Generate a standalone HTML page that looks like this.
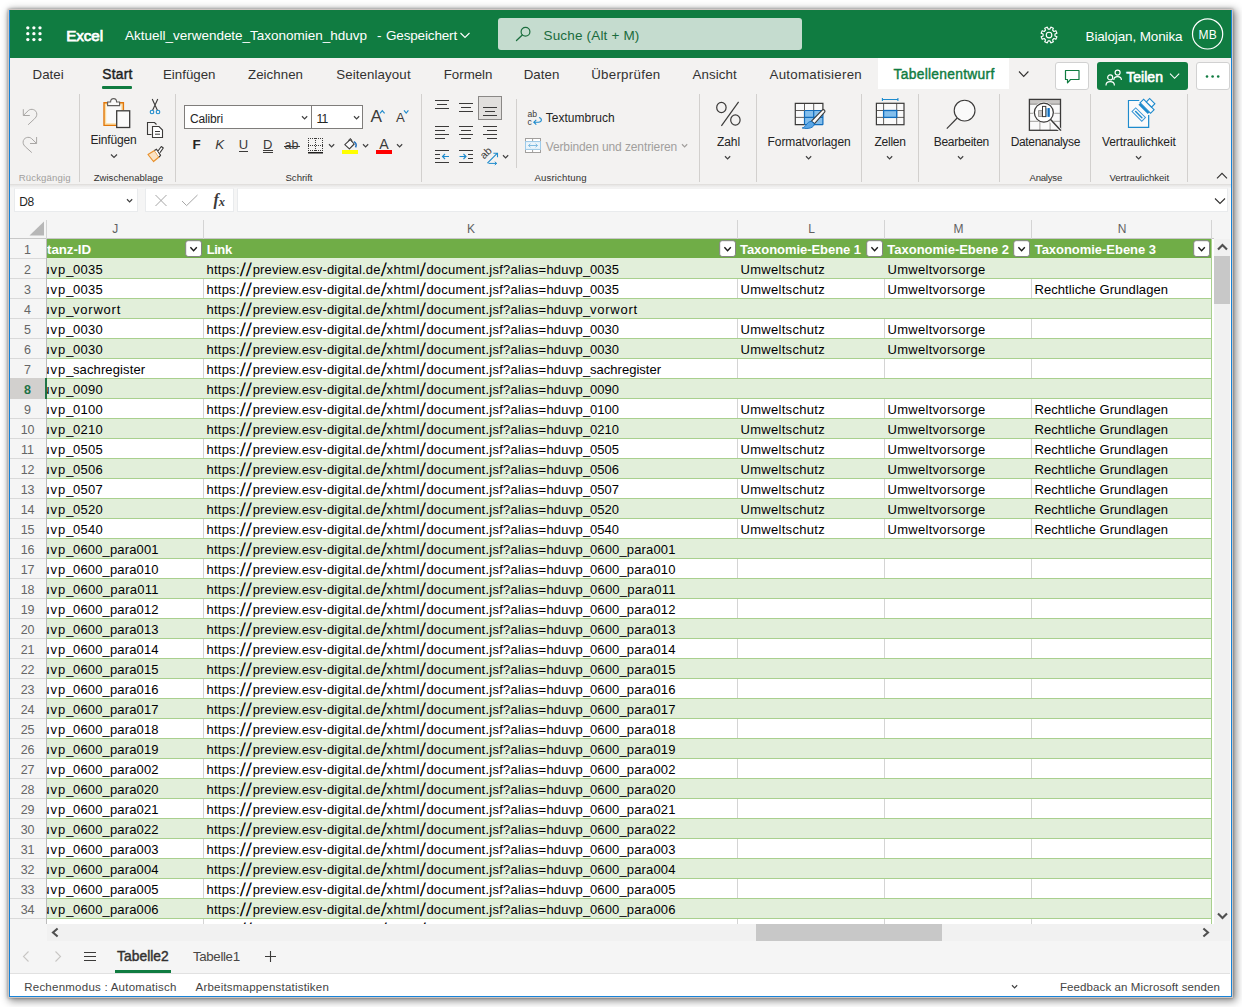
<!DOCTYPE html>
<html lang="de"><head><meta charset="utf-8"><title>Excel</title>
<style>
html,body{margin:0;padding:0;}
body{width:1242px;height:1007px;background:#fff;position:relative;overflow:hidden;font-family:"Liberation Sans",sans-serif;}
.r{position:absolute;display:block;}
.t{position:absolute;white-space:pre;line-height:20px;color:#242424;}
</style></head><body>
<div class="r" style="left:8px;top:9px;width:1225px;height:989px;background:#cfc6c3;box-shadow:0 0 3px rgba(0,0,0,.35),2px 2px 8px 1px rgba(0,0,0,.45);"></div>
<div class="r" style="left:9px;top:10px;width:1223px;height:987px;background:#1883d7;"></div>
<div class="r" id="win" style="left:10px;top:10px;width:1221px;height:986px;background:#f3f2f1;overflow:hidden;"></div>
<div class="r" style="left:10px;top:10px;width:1221px;height:48px;background:#107c41;"></div>
<svg class="r" style="left:26px;top:26px;" width="16" height="16" viewBox="0 0 16 16"><circle cx="1.8" cy="1.8" r="1.65" fill="#fff"/><circle cx="1.8" cy="7.7" r="1.65" fill="#fff"/><circle cx="1.8" cy="13.600000000000001" r="1.65" fill="#fff"/><circle cx="7.8999999999999995" cy="1.8" r="1.65" fill="#fff"/><circle cx="7.8999999999999995" cy="7.7" r="1.65" fill="#fff"/><circle cx="7.8999999999999995" cy="13.600000000000001" r="1.65" fill="#fff"/><circle cx="14.0" cy="1.8" r="1.65" fill="#fff"/><circle cx="14.0" cy="7.7" r="1.65" fill="#fff"/><circle cx="14.0" cy="13.600000000000001" r="1.65" fill="#fff"/></svg>
<span class="t" style="left:66.3px;top:26px;font-size:15.2px;letter-spacing:-0.108px;color:#fff;-webkit-text-stroke:0.42px currentColor;-webkit-text-stroke:0.75px currentColor;">Excel</span>
<span class="t" style="left:125px;top:26px;font-size:13.5px;letter-spacing:-0.012px;color:#fff;">Aktuell_verwendete_Taxonomien_hduvp</span>
<span class="t" style="left:377px;top:26px;font-size:13.5px;color:#fff;">-</span>
<span class="t" style="left:386px;top:26px;font-size:13.5px;letter-spacing:-0.163px;color:#fff;">Gespeichert</span>
<svg class="r" style="left:459px;top:31px;" width="12" height="8" viewBox="0 0 12 8"><path d="M1.5 2 L6 6.5 L10.5 2" fill="none" stroke="#fff" stroke-width="1.1"/></svg>
<div class="r" style="left:498px;top:18px;width:304px;height:32px;background:#c5dccf;border-radius:3px;"></div>
<svg class="r" style="left:515px;top:24px;" width="18" height="18" viewBox="0 0 18 18"><circle cx="10.5" cy="7.8" r="4.4" fill="none" stroke="#1b6e3e" stroke-width="1.2"/><path d="M7.3 11 L1.5 16.5" stroke="#1b6e3e" stroke-width="1.3" stroke-linecap="round"/></svg>
<span class="t" style="left:543.5px;top:26px;font-size:13.5px;letter-spacing:0.173px;color:#1a6b3c;">Suche (Alt + M)</span>
<svg class="r" style="left:1039px;top:24px;" width="22" height="22" viewBox="0 0 22 22"><path d="M17.95 12.77 L16.89 15.34 L14.90 14.53 L13.58 15.85 L14.39 17.84 L11.82 18.90 L10.99 16.93 L9.11 16.93 L8.28 18.90 L5.71 17.84 L6.52 15.85 L5.20 14.53 L3.21 15.34 L2.15 12.77 L4.12 11.94 L4.12 10.06 L2.15 9.23 L3.21 6.66 L5.20 7.47 L6.52 6.15 L5.71 4.16 L8.28 3.10 L9.11 5.07 L10.99 5.07 L11.82 3.10 L14.39 4.16 L13.58 6.15 L14.90 7.47 L16.89 6.66 L17.95 9.23 L15.98 10.06 L15.98 11.94 Z" fill="none" stroke="#fff" stroke-width="1.15" stroke-linejoin="round"/><circle cx="10.05" cy="11.0" r="2.8" fill="none" stroke="#fff" stroke-width="1.15"/></svg>
<span class="t" style="left:1085.5px;top:27px;font-size:13.5px;letter-spacing:-0.129px;color:#fff;">Bialojan, Monika</span>
<svg class="r" style="left:1190px;top:16px;" width="36" height="36" viewBox="0 0 36 36"><circle cx="17.6" cy="17.9" r="15.1" fill="none" stroke="#fff" stroke-width="1.2"/></svg>
<span class="t" style="left:1198.5px;top:25px;font-size:12px;letter-spacing:0.250px;color:#fff;">MB</span>
<div class="r" style="left:10px;top:58px;width:1221px;height:127px;background:#f3f2f1;"></div>
<div class="r" style="left:878px;top:58px;width:131px;height:31px;background:#fff;"></div>
<span class="t" style="left:32.5px;top:65px;font-size:13.3px;letter-spacing:0.031px;color:#323130;">Datei</span>
<span class="t" style="left:163px;top:65px;font-size:13.3px;letter-spacing:0.000px;color:#323130;">Einfügen</span>
<span class="t" style="left:248px;top:65px;font-size:13.3px;letter-spacing:0.037px;color:#323130;">Zeichnen</span>
<span class="t" style="left:336.2px;top:65px;font-size:13.3px;letter-spacing:0.109px;color:#323130;">Seitenlayout</span>
<span class="t" style="left:443.7px;top:65px;font-size:13.3px;letter-spacing:0.003px;color:#323130;">Formeln</span>
<span class="t" style="left:523.7px;top:65px;font-size:13.3px;letter-spacing:0.063px;color:#323130;">Daten</span>
<span class="t" style="left:591.2px;top:65px;font-size:13.3px;letter-spacing:0.277px;color:#323130;">Überprüfen</span>
<span class="t" style="left:692.5px;top:65px;font-size:13.3px;letter-spacing:0.084px;color:#323130;">Ansicht</span>
<span class="t" style="left:769.5px;top:65px;font-size:13.3px;letter-spacing:0.271px;color:#323130;">Automatisieren</span>
<span class="t" style="left:102.2px;top:65px;font-size:13.8px;letter-spacing:0.252px;color:#201f1e;-webkit-text-stroke:0.42px currentColor;">Start</span>
<div class="r" style="left:102px;top:86px;width:30px;height:3px;background:#107c41;border-radius:1px;"></div>
<span class="t" style="left:893.6px;top:65px;font-size:13.8px;letter-spacing:0.284px;color:#107c41;-webkit-text-stroke:0.42px currentColor;">Tabellenentwurf</span>
<svg class="r" style="left:1017px;top:69px;" width="14" height="10" viewBox="0 0 14 10"><path d="M2 2.5 L6.7 7.5 L11.4 2.5" fill="none" stroke="#323130" stroke-width="1.1"/></svg>
<div class="r" style="left:1055px;top:62px;width:34px;height:28px;background:#fff;border:1px solid #d1d1d1;border-radius:3px;box-sizing:border-box;"></div>
<svg class="r" style="left:1063px;top:68px;" width="18" height="17" viewBox="0 0 18 17"><path d="M2.5 2.5 H16 V11.5 H7.5 L4.5 14.8 V11.5 H2.5 Z" fill="none" stroke="#107c41" stroke-width="1.2" stroke-linejoin="round"/></svg>
<div class="r" style="left:1097px;top:62px;width:91px;height:28px;background:#107c41;border-radius:3px;"></div>
<svg class="r" style="left:1104.4px;top:67px;" width="20" height="20" viewBox="0 0 20 20"><circle cx="13.6" cy="5.6" r="2.5" fill="none" stroke="#fff" stroke-width="1.2"/><path d="M9.8 13 C9.8 8.6 17.4 8.6 17.4 13" fill="none" stroke="#fff" stroke-width="1.2"/><circle cx="6.2" cy="10.4" r="2.5" fill="none" stroke="#fff" stroke-width="1.2"/><path d="M2 18.4 C2 13.4 10.4 13.4 10.4 18.4" fill="none" stroke="#fff" stroke-width="1.2"/></svg>
<span class="t" style="left:1126.2px;top:67px;font-size:14px;letter-spacing:0.034px;color:#fff;-webkit-text-stroke:0.42px currentColor;-webkit-text-stroke:0.6px currentColor;">Teilen</span>
<svg class="r" style="left:1168px;top:71px;" width="14" height="10" viewBox="0 0 14 10"><path d="M2 2.6 L6.6 7.3 L11.2 2.6" fill="none" stroke="#fff" stroke-width="1.1"/></svg>
<div class="r" style="left:1196px;top:62px;width:34px;height:28px;background:#fff;border:1px solid #d1d1d1;border-radius:3px;box-sizing:border-box;"></div>
<svg class="r" style="left:1203px;top:73px;" width="20" height="7" viewBox="0 0 20 7"><circle cx="4" cy="3.5" r="1.3" fill="#107c41"/><circle cx="9.6" cy="3.5" r="1.3" fill="#107c41"/><circle cx="15.2" cy="3.5" r="1.3" fill="#107c41"/></svg>
<div class="r" style="left:79px;top:94px;width:1px;height:88px;background:#d2d0ce;"></div>
<div class="r" style="left:175px;top:94px;width:1px;height:88px;background:#d2d0ce;"></div>
<div class="r" style="left:421px;top:94px;width:1px;height:88px;background:#d2d0ce;"></div>
<div class="r" style="left:699px;top:94px;width:1px;height:88px;background:#d2d0ce;"></div>
<div class="r" style="left:756px;top:94px;width:1px;height:88px;background:#d2d0ce;"></div>
<div class="r" style="left:861px;top:94px;width:1px;height:88px;background:#d2d0ce;"></div>
<div class="r" style="left:918px;top:94px;width:1px;height:88px;background:#d2d0ce;"></div>
<div class="r" style="left:999px;top:94px;width:1px;height:88px;background:#d2d0ce;"></div>
<div class="r" style="left:1090px;top:94px;width:1px;height:88px;background:#d2d0ce;"></div>
<div class="r" style="left:1187px;top:94px;width:1px;height:88px;background:#d2d0ce;"></div>
<div class="r" style="left:516px;top:99px;width:1px;height:69px;background:#d2d0ce;"></div>
<svg class="r" style="left:20px;top:106px;" width="20" height="20" viewBox="0 0 20 20"><path d="M3.3 3.2 V9.5 H9.8" fill="none" stroke="#a8a6a4" stroke-width="1"/><path d="M3.5 9.3 L8.3 4.6 C11 2 16.8 3.5 16.8 8.2 C16.8 10.5 15.5 11.8 14.5 12.8 L8.1 18.8" fill="none" stroke="#a8a6a4" stroke-width="1"/></svg>
<svg class="r" style="left:20px;top:135px;" width="20" height="20" viewBox="0 0 20 20"><path d="M16.6 2 V8.5 H10" fill="none" stroke="#a8a6a4" stroke-width="1"/><path d="M16.4 8.3 L11.6 3.6 C9 1 3.1 2.5 3.1 7.2 C3.1 9.5 4.4 10.8 5.4 11.8 L11.8 17.6" fill="none" stroke="#a8a6a4" stroke-width="1"/></svg>
<span class="t" style="left:18.7px;top:168px;font-size:9.6px;letter-spacing:0.133px;color:#a19f9d;">Rückgängig</span>
<svg class="r" style="left:102px;top:96px;" width="30" height="34" viewBox="0 0 30 34"><rect x="2" y="6.8" width="19.4" height="22.6" fill="#fbdfa8"/><rect x="4.2" y="9" width="15" height="18.2" fill="#fafafa"/><path d="M21.4 14 V6.8 H2 V29.4 H14.4" fill="none" stroke="#e2770a" stroke-width="1.4"/><path d="M5.6 9.6 V6 H8.6 C8.6 1.5 14.6 1.5 14.6 6 H17.6 V9.6 Z" fill="#fafafa" stroke="#605e5c" stroke-width="1.1"/><rect x="14.7" y="14.8" width="13" height="16.7" fill="#fafafa" stroke="#3b3a39" stroke-width="1.3"/></svg>
<span class="t" style="left:90.5px;top:130px;font-size:12px;letter-spacing:-0.172px;">Einfügen</span>
<svg class="r" style="left:108.5px;top:151px;" width="10" height="10" viewBox="0 0 10 10"><path d="M2 3.50 L5 6.50 L8 3.50" fill="none" stroke="#424242" stroke-width="1.2"/></svg>
<svg class="r" style="left:148px;top:97px;" width="14" height="18" viewBox="0 0 14 18"><path d="M4.2 2 L9.4 13.2 M9.8 2 L4.6 13.2" stroke="#3b3a39" stroke-width="1.1" fill="none"/><circle cx="4" cy="15" r="1.8" fill="none" stroke="#1e8bcd" stroke-width="1.1"/><circle cx="10" cy="15" r="1.8" fill="none" stroke="#1e8bcd" stroke-width="1.1"/></svg>
<svg class="r" style="left:146px;top:121px;" width="20" height="18" viewBox="0 0 20 18"><path d="M5.5 13.5 H1.5 V1.5 H8.5 L10.5 3.5" fill="none" stroke="#3b3a39" stroke-width="1.1"/><path d="M6.5 5.5 H13 L16.5 9 V16.5 H6.5 Z" fill="#fff" stroke="#3b3a39" stroke-width="1.1"/><path d="M9 10.5 H14 M9 13.2 H14" stroke="#3b3a39" stroke-width="1"/></svg>
<svg class="r" style="left:146px;top:145px;" width="20" height="18" viewBox="0 0 20 18"><path d="M2 9.5 L8.5 5.5 L13 12 L7.5 16.5 Z" fill="#fbe3c4" stroke="#e8912d" stroke-width="1.2" stroke-linejoin="round"/><path d="M8.5 5.5 L10.5 4.2 L14.6 10.4 L13 12" fill="#fff" stroke="#3b3a39" stroke-width="1.1" stroke-linejoin="round"/><path d="M12 6 L15.3 1.5 L17.3 3 L14 7.6" fill="#fff" stroke="#3b3a39" stroke-width="1.1" stroke-linejoin="round"/></svg>
<span class="t" style="left:93.7px;top:168px;font-size:9.6px;letter-spacing:-0.003px;color:#323130;">Zwischenablage</span>
<div class="r" style="left:184px;top:105px;width:179px;height:24px;background:#fff;border:1px solid #7f7d7b;box-sizing:border-box;"></div>
<div class="r" style="left:311px;top:106px;width:1px;height:22px;background:#7f7d7b;"></div>
<span class="t" style="left:190px;top:109px;font-size:12px;letter-spacing:-0.145px;">Calibri</span>
<svg class="r" style="left:300.4px;top:112.7px;" width="9.2" height="9.2" viewBox="0 0 9.2 9.2"><path d="M2 3.30 L4.6 5.90 L7.2 3.30" fill="none" stroke="#424242" stroke-width="1.2"/></svg>
<span class="t" style="left:316.6px;top:109px;font-size:12.2px;letter-spacing:-1px;">11</span>
<svg class="r" style="left:352.09999999999997px;top:112.7px;" width="9.2" height="9.2" viewBox="0 0 9.2 9.2"><path d="M2 3.30 L4.6 5.90 L7.2 3.30" fill="none" stroke="#424242" stroke-width="1.2"/></svg>
<span class="t" style="left:370.5px;top:106px;font-size:17.2px;color:#3b3a39;">A</span>
<svg class="r" style="left:379.3px;top:108.8px;" width="7" height="6" viewBox="0 0 7 6"><path d="M1 4.4 L3.3 1.6 L5.6 4.4" fill="none" stroke="#1e8bcd" stroke-width="1.1"/></svg>
<span class="t" style="left:396px;top:108px;font-size:13.2px;color:#3b3a39;">A</span>
<svg class="r" style="left:403.3px;top:109.2px;" width="7" height="6" viewBox="0 0 7 6"><path d="M1 1.4 L3.2 4.2 L5.4 1.4" fill="none" stroke="#1e8bcd" stroke-width="1.1"/></svg>
<span class="t" style="left:192.5px;top:135px;font-size:13.4px;font-weight:700;">F</span>
<span class="t" style="left:215.2px;top:135px;font-size:13.4px;font-style:italic;color:#3b3a39;">K</span>
<span class="t" style="left:238.7px;top:135px;font-size:13px;color:#3b3a39;">U</span>
<div class="r" style="left:239px;top:151px;width:9px;height:1px;background:#3b3a39;"></div>
<span class="t" style="left:263px;top:135px;font-size:13px;color:#3b3a39;">D</span>
<div class="r" style="left:263px;top:150px;width:10px;height:1px;background:#3b3a39;"></div>
<div class="r" style="left:263px;top:152px;width:10px;height:1px;background:#3b3a39;"></div>
<span class="t" style="left:284.5px;top:135px;font-size:12.5px;letter-spacing:0.047px;color:#3b3a39;">ab</span>
<div class="r" style="left:284px;top:146px;width:16px;height:1px;background:#3b3a39;"></div>
<svg class="r" style="left:308px;top:138px;" width="16" height="16" viewBox="0 0 16 16"><g fill="#3b3a39"><rect x="0" y="0" width="1" height="1"/><rect x="2" y="0" width="1" height="1"/><rect x="4" y="0" width="1" height="1"/><rect x="6" y="0" width="1" height="1"/><rect x="8" y="0" width="1" height="1"/><rect x="10" y="0" width="1" height="1"/><rect x="12" y="0" width="1" height="1"/><rect x="14" y="0" width="1" height="1"/><rect x="0" y="7" width="1" height="1"/><rect x="2" y="7" width="1" height="1"/><rect x="4" y="7" width="1" height="1"/><rect x="6" y="7" width="1" height="1"/><rect x="8" y="7" width="1" height="1"/><rect x="10" y="7" width="1" height="1"/><rect x="12" y="7" width="1" height="1"/><rect x="14" y="7" width="1" height="1"/><rect x="0" y="12" width="1" height="1"/><rect x="2" y="12" width="1" height="1"/><rect x="4" y="12" width="1" height="1"/><rect x="6" y="12" width="1" height="1"/><rect x="8" y="12" width="1" height="1"/><rect x="10" y="12" width="1" height="1"/><rect x="12" y="12" width="1" height="1"/><rect x="14" y="12" width="1" height="1"/><rect x="0" y="0" width="1" height="1"/><rect x="0" y="2" width="1" height="1"/><rect x="0" y="4" width="1" height="1"/><rect x="0" y="6" width="1" height="1"/><rect x="0" y="8" width="1" height="1"/><rect x="0" y="10" width="1" height="1"/><rect x="0" y="12" width="1" height="1"/><rect x="7" y="0" width="1" height="1"/><rect x="7" y="2" width="1" height="1"/><rect x="7" y="4" width="1" height="1"/><rect x="7" y="6" width="1" height="1"/><rect x="7" y="8" width="1" height="1"/><rect x="7" y="10" width="1" height="1"/><rect x="7" y="12" width="1" height="1"/><rect x="14" y="0" width="1" height="1"/><rect x="14" y="2" width="1" height="1"/><rect x="14" y="4" width="1" height="1"/><rect x="14" y="6" width="1" height="1"/><rect x="14" y="8" width="1" height="1"/><rect x="14" y="10" width="1" height="1"/><rect x="14" y="12" width="1" height="1"/></g><rect x="0" y="14" width="15" height="1.5" fill="#201f1e"/></svg>
<svg class="r" style="left:327.0px;top:140.9px;" width="9.2" height="9.2" viewBox="0 0 9.2 9.2"><path d="M2 3.30 L4.6 5.90 L7.2 3.30" fill="none" stroke="#424242" stroke-width="1.2"/></svg>
<svg class="r" style="left:342px;top:137px;" width="18" height="18" viewBox="0 0 18 18"><path d="M2.8 7.6 L8.2 2.6 L12.2 7 L7.4 11.8 Z" fill="#fafafa" stroke="#3b3a39" stroke-width="1.1" stroke-linejoin="round"/><path d="M6.9 4 C7.2 0.8 9.6 0.6 9.9 4.6" fill="none" stroke="#3b3a39" stroke-width="1"/><path d="M11.8 4.6 C14 5.6 14.6 8 13.6 10.4" fill="none" stroke="#1e6fc0" stroke-width="1.5"/><rect x="0" y="13" width="16" height="4" fill="#ffff00"/></svg>
<svg class="r" style="left:360.9px;top:140.9px;" width="9.2" height="9.2" viewBox="0 0 9.2 9.2"><path d="M2 3.30 L4.6 5.90 L7.2 3.30" fill="none" stroke="#424242" stroke-width="1.2"/></svg>
<span class="t" style="left:379.3px;top:134px;font-size:14.2px;color:#3b3a39;">A</span>
<div class="r" style="left:376px;top:150px;width:16px;height:4px;background:#ff0000;"></div>
<svg class="r" style="left:394.9px;top:140.9px;" width="9.2" height="9.2" viewBox="0 0 9.2 9.2"><path d="M2 3.30 L4.6 5.90 L7.2 3.30" fill="none" stroke="#424242" stroke-width="1.2"/></svg>
<span class="t" style="left:285.5px;top:168px;font-size:9.6px;letter-spacing:-0.029px;color:#323130;">Schrift</span>
<div class="r" style="left:435px;top:100px;width:14px;height:1px;background:#3b3a39;"></div>
<div class="r" style="left:437px;top:104px;width:10px;height:1px;background:#3b3a39;"></div>
<div class="r" style="left:435px;top:108px;width:14px;height:1px;background:#3b3a39;"></div>
<div class="r" style="left:459px;top:103px;width:14px;height:1px;background:#3b3a39;"></div>
<div class="r" style="left:461px;top:107px;width:10px;height:1px;background:#3b3a39;"></div>
<div class="r" style="left:459px;top:111px;width:14px;height:1px;background:#3b3a39;"></div>
<div class="r" style="left:478px;top:96px;width:24px;height:24px;background:#e1dfdd;border:1px solid #8a8886;box-sizing:border-box;"></div>
<div class="r" style="left:483px;top:107px;width:14px;height:1px;background:#3b3a39;"></div>
<div class="r" style="left:485px;top:111px;width:10px;height:1px;background:#3b3a39;"></div>
<div class="r" style="left:483px;top:115px;width:14px;height:1px;background:#3b3a39;"></div>
<div class="r" style="left:435px;top:126px;width:14px;height:1px;background:#3b3a39;"></div>
<div class="r" style="left:435px;top:130px;width:10px;height:1px;background:#3b3a39;"></div>
<div class="r" style="left:435px;top:134px;width:14px;height:1px;background:#3b3a39;"></div>
<div class="r" style="left:435px;top:138px;width:10px;height:1px;background:#3b3a39;"></div>
<div class="r" style="left:459px;top:126px;width:14px;height:1px;background:#3b3a39;"></div>
<div class="r" style="left:461px;top:130px;width:10px;height:1px;background:#3b3a39;"></div>
<div class="r" style="left:459px;top:134px;width:14px;height:1px;background:#3b3a39;"></div>
<div class="r" style="left:461px;top:138px;width:10px;height:1px;background:#3b3a39;"></div>
<div class="r" style="left:483px;top:126px;width:14px;height:1px;background:#3b3a39;"></div>
<div class="r" style="left:487px;top:130px;width:10px;height:1px;background:#3b3a39;"></div>
<div class="r" style="left:483px;top:134px;width:14px;height:1px;background:#3b3a39;"></div>
<div class="r" style="left:487px;top:138px;width:10px;height:1px;background:#3b3a39;"></div>
<div class="r" style="left:435px;top:150px;width:14px;height:1px;background:#3b3a39;"></div>
<div class="r" style="left:435px;top:162px;width:14px;height:1px;background:#3b3a39;"></div>
<div class="r" style="left:435px;top:154px;width:5px;height:1px;background:#3b3a39;"></div>
<div class="r" style="left:435px;top:158px;width:5px;height:1px;background:#3b3a39;"></div>
<svg class="r" style="left:441px;top:152px;" width="9" height="9" viewBox="0 0 9 9"><path d="M8 4.5 H1.5 M4 2 L1.5 4.5 L4 7" fill="none" stroke="#1e8bcd" stroke-width="1.1"/></svg>
<div class="r" style="left:459px;top:150px;width:14px;height:1px;background:#3b3a39;"></div>
<div class="r" style="left:459px;top:162px;width:14px;height:1px;background:#3b3a39;"></div>
<div class="r" style="left:468px;top:154px;width:5px;height:1px;background:#3b3a39;"></div>
<div class="r" style="left:468px;top:158px;width:5px;height:1px;background:#3b3a39;"></div>
<svg class="r" style="left:459px;top:152px;" width="9" height="9" viewBox="0 0 9 9"><path d="M0.5 4.5 H7 M4.5 2 L7 4.5 L4.5 7" fill="none" stroke="#1e8bcd" stroke-width="1.1"/></svg>
<svg class="r" style="left:481px;top:148px;" width="19" height="18" viewBox="0 0 19 18"><text x="0" y="0" font-size="10.5" font-family="Liberation Sans, sans-serif" fill="#3b3a39" transform="translate(3,11.6) rotate(-43)">ab</text><path d="M6.4 15.2 L16.4 5.2 M12.4 5.2 H16.5 V9.3" fill="none" stroke="#1e8bcd" stroke-width="1.1"/><path d="M7.5 15.4 H15.6 M13.8 13.8 L15.7 15.4 L13.8 17" fill="none" stroke="#1e8bcd" stroke-width="1"/></svg>
<svg class="r" style="left:501.09999999999997px;top:152.4px;" width="9.2" height="9.2" viewBox="0 0 9.2 9.2"><path d="M2 3.30 L4.6 5.90 L7.2 3.30" fill="none" stroke="#424242" stroke-width="1.2"/></svg>
<svg class="r" style="left:526px;top:109px;" width="17" height="17" viewBox="0 0 17 17"><text x="1.5" y="8.2" font-size="8.6" font-family="Liberation Sans, sans-serif" fill="#3b3a39">ab</text><text x="1.5" y="15.6" font-size="8.6" font-family="Liberation Sans, sans-serif" fill="#3b3a39">c</text><path d="M13 8.5 C16.5 9.5 16 13.2 12.5 13.2 H8 M10.3 10.8 L7.8 13.2 L10.3 15.6" fill="none" stroke="#1e8bcd" stroke-width="1.1"/></svg>
<span class="t" style="left:545.7px;top:108px;font-size:12px;letter-spacing:0.027px;">Textumbruch</span>
<svg class="r" style="left:525px;top:138px;" width="16" height="15" viewBox="0 0 16 15"><rect x="0.5" y="0.5" width="15" height="14" fill="#fff" stroke="#a19f9d" stroke-width="1"/><path d="M0.5 3.6 H15.5 M0.5 11.4 H15.5 M7.6 0.5 V3.6 M7.6 11.4 V14.5" stroke="#a19f9d" stroke-width="1"/><rect x="0.5" y="3.6" width="15" height="7.8" fill="#eaf4fb" stroke="#9ccbea" stroke-width="1"/><path d="M3.5 7.5 H12.5 M5.4 5.8 L3.5 7.5 L5.4 9.2 M10.6 5.8 L12.5 7.5 L10.6 9.2" fill="none" stroke="#7fbbe0" stroke-width="1"/></svg>
<span class="t" style="left:545.7px;top:137px;font-size:12px;letter-spacing:-0.109px;color:#a19f9d;">Verbinden und zentrieren</span>
<svg class="r" style="left:680.4px;top:140.9px;" width="9.2" height="9.2" viewBox="0 0 9.2 9.2"><path d="M2 3.30 L4.6 5.90 L7.2 3.30" fill="none" stroke="#a19f9d" stroke-width="1.2"/></svg>
<span class="t" style="left:534.5px;top:168px;font-size:9.6px;letter-spacing:0.148px;color:#323130;">Ausrichtung</span>
<svg class="r" style="left:714px;top:99px;" width="28" height="29" viewBox="0 0 28 29"><ellipse cx="7.4" cy="8.5" rx="4.7" ry="5.2" fill="none" stroke="#3b3a39" stroke-width="1.2"/><ellipse cx="21.4" cy="21" rx="4.7" ry="5.2" fill="none" stroke="#3b3a39" stroke-width="1.2"/><path d="M24.6 2.8 L7.4 26.8" stroke="#3b3a39" stroke-width="1.2"/></svg>
<span class="t" style="left:717px;top:132px;font-size:12px;letter-spacing:-0.086px;">Zahl</span>
<svg class="r" style="left:722.9px;top:153.4px;" width="9.2" height="9.2" viewBox="0 0 9.2 9.2"><path d="M2 3.30 L4.6 5.90 L7.2 3.30" fill="none" stroke="#424242" stroke-width="1.2"/></svg>
<svg class="r" style="left:794px;top:101px;" width="32" height="30" viewBox="0 0 32 30"><rect x="1.3" y="2.3" width="27.6" height="21.4" fill="#fafafa"/><rect x="10.5" y="9.5" width="18.4" height="14.2" fill="#83beec"/><path d="M10.5 9.5 H28.9 M10.5 16.4 H28.9 M10.5 9.5 V23.7 M19.7 9.5 V23.7 M28.9 9.5 V23.7 M10.5 23.7 H28.9" stroke="#0f6cbd" stroke-width="1.2" fill="none"/><path d="M1.3 9.5 H10.5 M1.3 16.4 H10.5 M10.5 2.3 V9.5 M19.7 2.3 V9.5" stroke="#605e5c" stroke-width="1"/><path d="M10.5 23.7 H1.3 V2.3 H28.9 V9.5" fill="none" stroke="#3b3a39" stroke-width="1.2"/><path d="M30.4 11.4 L20.6 22.6 L17.4 20.2 L28.2 9.2 C29.8 7.8 31.8 9.6 30.4 11.4 Z" fill="#fafafa" stroke="#3b3a39" stroke-width="1.1"/><path d="M17.4 20.4 L20.4 22.8 C20 26.6 15 28.4 8.2 27 C12.6 25.8 12.4 20.6 17.4 20.4 Z" fill="#5aa6e6" stroke="#0f6cbd" stroke-width="0.9"/></svg>
<span class="t" style="left:767.5px;top:132px;font-size:12px;letter-spacing:-0.060px;">Formatvorlagen</span>
<svg class="r" style="left:804.1px;top:153.4px;" width="9.2" height="9.2" viewBox="0 0 9.2 9.2"><path d="M2 3.30 L4.6 5.90 L7.2 3.30" fill="none" stroke="#424242" stroke-width="1.2"/></svg>
<svg class="r" style="left:875px;top:96px;" width="31" height="30" viewBox="0 0 31 30"><path d="M7.4 2 V5 M22.9 2 V5 M7.4 3.5 H22.9" stroke="#1e8bcd" stroke-width="1.1" fill="none"/><rect x="1.4" y="7.3" width="27.6" height="21.4" fill="#fafafa"/><path d="M1.4 14.5 H29 M1.4 21.4 H29 M8.6 7.3 V28.7 M21.7 7.3 V28.7" stroke="#605e5c" stroke-width="1"/><rect x="8.6" y="14.5" width="13.1" height="6.9" fill="#83beec" stroke="#0f6cbd" stroke-width="1.3"/><rect x="1.4" y="7.3" width="27.6" height="21.4" fill="none" stroke="#3b3a39" stroke-width="1.2"/></svg>
<span class="t" style="left:874.5px;top:132px;font-size:12px;letter-spacing:-0.248px;">Zellen</span>
<svg class="r" style="left:884.9px;top:153.4px;" width="9.2" height="9.2" viewBox="0 0 9.2 9.2"><path d="M2 3.30 L4.6 5.90 L7.2 3.30" fill="none" stroke="#424242" stroke-width="1.2"/></svg>
<svg class="r" style="left:944px;top:98px;" width="34" height="34" viewBox="0 0 34 34"><circle cx="20.6" cy="12.6" r="10.4" fill="#fafafa" stroke="#3b3a39" stroke-width="1.1"/><path d="M13.2 20 L2.8 30.6" stroke="#3b3a39" stroke-width="1.2"/></svg>
<span class="t" style="left:933.7px;top:132px;font-size:12px;letter-spacing:-0.275px;">Bearbeiten</span>
<svg class="r" style="left:956.1px;top:153.4px;" width="9.2" height="9.2" viewBox="0 0 9.2 9.2"><path d="M2 3.30 L4.6 5.90 L7.2 3.30" fill="none" stroke="#424242" stroke-width="1.2"/></svg>
<svg class="r" style="left:1028px;top:98px;" width="35" height="35" viewBox="0 0 35 35"><rect x="1.4" y="1.4" width="31.1" height="30.9" fill="#fafafa"/><rect x="1.4" y="1.4" width="31.1" height="4.2" fill="#c8c6c4"/><path d="M1.4 6.1 H32.5" stroke="#797775" stroke-width="1"/><path d="M1.4 15.3 H32.5 M1.4 23.3 H32.5 M11.9 6.1 V32.3 M22.1 6.1 V32.3" stroke="#a19f9d" stroke-width="1"/><rect x="1.4" y="1.4" width="31.1" height="30.9" fill="none" stroke="#3b3a39" stroke-width="1.3"/><path d="M22.4 22.4 L32.7 32.5" stroke="#fafafa" stroke-width="3.4"/><circle cx="15.85" cy="14.6" r="10.6" fill="#fafafa"/><circle cx="15.85" cy="14.6" r="9.5" fill="#fff" stroke="#3b3a39" stroke-width="1.25"/><rect x="10.6" y="12.6" width="3.6" height="5.9" fill="#c8c6c4" stroke="#8a8886" stroke-width="0.8"/><rect x="18" y="10.1" width="3.7" height="8.7" fill="#83beec"/><rect x="19.9" y="10.1" width="1.8" height="8.7" fill="#0f6cbd"/><rect x="14.5" y="8.4" width="3.3" height="10.2" fill="#fff" stroke="#3b3a39" stroke-width="1"/><path d="M22.6 21.6 L32.8 32.4" stroke="#3b3a39" stroke-width="1.5"/></svg>
<span class="t" style="left:1010.7px;top:132px;font-size:12px;letter-spacing:-0.341px;">Datenanalyse</span>
<span class="t" style="left:1029.5px;top:168px;font-size:9.6px;letter-spacing:-0.234px;color:#323130;">Analyse</span>
<svg class="r" style="left:1126px;top:95px;" width="34" height="36" viewBox="0 0 34 36"><path d="M13.2 5.5 H2.5 V32.4 H22.6 V20.1" fill="#fafafa" stroke="#1e8bcd" stroke-width="1.1"/><path d="M2.5 5.5 H16 L22.6 13 V32.4 H2.5 Z" fill="#fafafa" stroke="none"/><path d="M13.2 5.5 H2.5 V32.4 H22.6 V20.1" fill="none" stroke="#1e8bcd" stroke-width="1.1"/><g transform="translate(12.75,19.57) rotate(45)"><rect x="-6.9" y="-2.6" width="13.8" height="5.2" fill="#fafafa" stroke="#3a96d6" stroke-width="1"/><path d="M-4.4 0 H4.4" stroke="#1e8bcd" stroke-width="1.5" stroke-linecap="round"/><rect x="-7.2" y="-9.2" width="13.2" height="2.4" fill="#1e8bcd"/><rect x="-7.4" y="-14.3" width="14.8" height="5" fill="#fafafa" stroke="#1e8bcd" stroke-width="1.1"/><rect x="-3.6" y="-19" width="7.4" height="4.7" fill="#fafafa" stroke="#1e8bcd" stroke-width="1.1"/></g></svg>
<span class="t" style="left:1102px;top:132px;font-size:12px;letter-spacing:-0.112px;">Vertraulichkeit</span>
<svg class="r" style="left:1134.1000000000001px;top:153.4px;" width="9.2" height="9.2" viewBox="0 0 9.2 9.2"><path d="M2 3.30 L4.6 5.90 L7.2 3.30" fill="none" stroke="#424242" stroke-width="1.2"/></svg>
<span class="t" style="left:1109.5px;top:168px;font-size:9.6px;letter-spacing:-0.051px;color:#323130;">Vertraulichkeit</span>
<svg class="r" style="left:1215px;top:171px;" width="14" height="10" viewBox="0 0 14 10"><path d="M2 7.4 L7 2.4 L12 7.4" fill="none" stroke="#323130" stroke-width="1.1"/></svg>
<div class="r" style="left:10px;top:184px;width:1221px;height:1px;background:#e1dfdd;"></div>
<div class="r" style="left:10px;top:185px;width:1221px;height:3px;background:#f8f8f8;background:linear-gradient(#e6e5e4,#f5f5f5);"></div>
<div class="r" style="left:10px;top:188px;width:1221px;height:32px;background:#f5f5f5;"></div>
<div class="r" style="left:14px;top:188px;width:124px;height:24px;background:#fff;border:1px solid #e9ebed;border-top-color:#f2f2f2;box-sizing:border-box;"></div>
<span class="t" style="left:19.3px;top:192px;font-size:12px;letter-spacing:-0.4px;">D8</span>
<svg class="r" style="left:125.1px;top:196.4px;" width="9.2" height="9.2" viewBox="0 0 9.2 9.2"><path d="M2 3.30 L4.6 5.90 L7.2 3.30" fill="none" stroke="#424242" stroke-width="1.2"/></svg>
<div class="r" style="left:145px;top:188px;width:89px;height:24px;background:#fff;border:1px solid #e9ebed;border-top-color:#f2f2f2;box-sizing:border-box;"></div>
<svg class="r" style="left:154px;top:194px;" width="14" height="13" viewBox="0 0 14 13"><path d="M1.5 1 L12.5 12 M12.5 1 L1.5 12" stroke="#a6a6a6" stroke-width="1"/></svg>
<svg class="r" style="left:181px;top:194px;" width="18" height="13" viewBox="0 0 18 13"><path d="M1 7 L5.6 11.6 L16.5 1" fill="none" stroke="#a6a6a6" stroke-width="1"/></svg>
<span class="t" style="left:213.5px;top:190px;font-size:16px;font-family:'Liberation Serif',serif;font-style:italic;font-weight:700;color:#3b3a39;letter-spacing:-0.2px;">f<span style="font-size:12.5px;position:relative;top:1px;">x</span></span>
<div class="r" style="left:237px;top:188px;width:991px;height:24px;background:#fff;border:1px solid #e9ebed;border-top-color:#f2f2f2;box-sizing:border-box;"></div>
<svg class="r" style="left:1213px;top:196px;" width="14" height="10" viewBox="0 0 14 10"><path d="M2 2.5 L7 7.5 L12 2.5" fill="none" stroke="#323130" stroke-width="1.1"/></svg>
<div class="r" style="left:10px;top:220px;width:1204px;height:704px;background:#fff;"></div>
<div class="r" style="left:10px;top:220px;width:1204px;height:19px;background:#f5f5f5;"></div>
<div class="r" style="left:10px;top:238px;width:1204px;height:1px;background:#c8c8c8;"></div>
<span class="t" style="left:112.2px;top:219px;font-size:12px;color:#616161;">J</span>
<div class="r" style="left:203px;top:220px;width:1px;height:19px;background:#d4d4d4;"></div>
<span class="t" style="left:466.9921875px;top:219px;font-size:12px;color:#616161;">K</span>
<div class="r" style="left:737px;top:220px;width:1px;height:19px;background:#d4d4d4;"></div>
<span class="t" style="left:808.15625px;top:219px;font-size:12px;color:#616161;">L</span>
<div class="r" style="left:884px;top:220px;width:1px;height:19px;background:#d4d4d4;"></div>
<span class="t" style="left:953.5px;top:219px;font-size:12px;color:#616161;">M</span>
<div class="r" style="left:1031px;top:220px;width:1px;height:19px;background:#d4d4d4;"></div>
<span class="t" style="left:1117.6640625px;top:219px;font-size:12px;color:#616161;">N</span>
<div class="r" style="left:1211px;top:220px;width:1px;height:19px;background:#d4d4d4;"></div>
<div class="r" style="left:46px;top:220px;width:1px;height:19px;background:#d4d4d4;"></div>
<svg class="r" style="left:29px;top:221px;" width="16" height="15" viewBox="0 0 16 15"><path d="M15 0.5 V14.5 H0.5 Z" fill="#b7b7b7"/></svg>
<div class="r" style="left:10px;top:239px;width:36px;height:685px;background:#f5f5f5;"></div>
<div class="r" style="left:46px;top:239px;width:1px;height:685px;background:#bcbcbc;"></div>
<div class="r" style="left:47px;top:239px;width:1165px;height:19px;background:#70ad47;"></div>
<div class="r" style="left:47px;top:258px;width:1165px;height:1px;background:#e2efda;"></div>
<span class="t" style="left:206.7px;top:240px;font-size:13px;letter-spacing:-0.434px;font-weight:700;color:#fff;">Link</span>
<span class="t" style="left:740px;top:240px;font-size:13px;letter-spacing:-0.050px;font-weight:700;color:#fff;">Taxonomie-Ebene 1</span>
<span class="t" style="left:887.3px;top:240px;font-size:13px;letter-spacing:-0.008px;font-weight:700;color:#fff;">Taxonomie-Ebene 2</span>
<span class="t" style="left:1034.7px;top:240px;font-size:13px;letter-spacing:-0.032px;font-weight:700;color:#fff;">Taxonomie-Ebene 3</span>
<div class="r" style="left:47px;top:239px;width:150px;height:19px;overflow:hidden;">
<span class="t" style="left:-19.01875px;top:1px;font-size:13.3px;font-weight:700;color:#fff;letter-spacing:-0.05px;">Instanz-ID</span>
</div>
<svg class="r" style="left:185px;top:240px;" width="18" height="18" viewBox="0 0 18 18"><rect x="0.7" y="0.7" width="15.8" height="15.8" rx="2.4" fill="#fff" stroke="#858585" stroke-width="1"/><path d="M5.4 7.3 l3.2 3.5 l3.2 -3.5" fill="none" stroke="#1a1a1a" stroke-width="1.4"/></svg>
<svg class="r" style="left:719px;top:240px;" width="18" height="18" viewBox="0 0 18 18"><rect x="0.7" y="0.7" width="15.8" height="15.8" rx="2.4" fill="#fff" stroke="#858585" stroke-width="1"/><path d="M5.4 7.3 l3.2 3.5 l3.2 -3.5" fill="none" stroke="#1a1a1a" stroke-width="1.4"/></svg>
<svg class="r" style="left:866px;top:240px;" width="18" height="18" viewBox="0 0 18 18"><rect x="0.7" y="0.7" width="15.8" height="15.8" rx="2.4" fill="#fff" stroke="#858585" stroke-width="1"/><path d="M5.4 7.3 l3.2 3.5 l3.2 -3.5" fill="none" stroke="#1a1a1a" stroke-width="1.4"/></svg>
<svg class="r" style="left:1013px;top:240px;" width="18" height="18" viewBox="0 0 18 18"><rect x="0.7" y="0.7" width="15.8" height="15.8" rx="2.4" fill="#fff" stroke="#858585" stroke-width="1"/><path d="M5.4 7.3 l3.2 3.5 l3.2 -3.5" fill="none" stroke="#1a1a1a" stroke-width="1.4"/></svg>
<svg class="r" style="left:1193px;top:240px;" width="18" height="18" viewBox="0 0 18 18"><rect x="0.7" y="0.7" width="15.8" height="15.8" rx="2.4" fill="#fff" stroke="#858585" stroke-width="1"/><path d="M5.4 7.3 l3.2 3.5 l3.2 -3.5" fill="none" stroke="#1a1a1a" stroke-width="1.4"/></svg>
<div class="r" style="left:47px;top:259px;width:1165px;height:19px;background:#e2efda;"></div>
<div class="r" style="left:47px;top:278px;width:1165px;height:1px;background:#a9d08e;"></div>
<div class="r" style="left:10px;top:278px;width:36px;height:1px;background:#d9d9d9;"></div>
<div class="r" style="left:47px;top:259px;width:156px;height:19px;overflow:hidden;">
<span class="t" style="left:-4.800000000000002px;top:1px;font-size:13px;color:#000;letter-spacing:1.066px;">uvp_</span>
<span class="t" style="left:26.0px;top:1px;font-size:13px;color:#000;letter-spacing:0.293px;">0035</span>
</div>
<span class="t" style="left:206.4px;top:260px;font-size:13px;color:#000;letter-spacing:0.261px;">https:</span>
<span class="t" style="left:240.2px;top:260px;font-size:18.5px;color:#000;transform:skewX(-4deg);transform-origin:50% 60%;">/</span>
<span class="t" style="left:246.2px;top:260px;font-size:18.5px;color:#000;transform:skewX(-4deg);transform-origin:50% 60%;">/</span>
<span class="t" style="left:252.7px;top:260px;font-size:13px;color:#000;letter-spacing:0.167px;">preview.esv-digital.de</span>
<span class="t" style="left:380.6px;top:260px;font-size:18.5px;color:#000;transform:skewX(-4deg);transform-origin:50% 60%;">/</span>
<span class="t" style="left:386.6px;top:260px;font-size:13px;color:#000;letter-spacing:0.459px;">xhtml</span>
<span class="t" style="left:420.2px;top:260px;font-size:18.5px;color:#000;transform:skewX(-4deg);transform-origin:50% 60%;">/</span>
<span class="t" style="left:426.40000000000003px;top:260px;font-size:13px;color:#000;letter-spacing:0.249px;">document.jsf?alias=hduvp_</span>
<span class="t" style="left:590.0px;top:260px;font-size:13px;color:#000;letter-spacing:0.026px;">0035</span>
<span class="t" style="left:740.5px;top:260px;font-size:13px;letter-spacing:0.298px;color:#000;">Umweltschutz</span>
<span class="t" style="left:887.5px;top:260px;font-size:13px;letter-spacing:0.291px;color:#000;">Umweltvorsorge</span>
<div class="r" style="left:737px;top:279px;width:1px;height:19px;background:#d4d4d4;"></div>
<div class="r" style="left:884px;top:279px;width:1px;height:19px;background:#d4d4d4;"></div>
<div class="r" style="left:1031px;top:279px;width:1px;height:19px;background:#d4d4d4;"></div>
<div class="r" style="left:203px;top:279px;width:1px;height:19px;background:#d4d4d4;"></div>
<div class="r" style="left:47px;top:298px;width:1165px;height:1px;background:#a9d08e;"></div>
<div class="r" style="left:10px;top:298px;width:36px;height:1px;background:#d9d9d9;"></div>
<div class="r" style="left:47px;top:279px;width:156px;height:19px;overflow:hidden;">
<span class="t" style="left:-4.800000000000002px;top:1px;font-size:13px;color:#000;letter-spacing:1.066px;">uvp_</span>
<span class="t" style="left:26.0px;top:1px;font-size:13px;color:#000;letter-spacing:0.293px;">0035</span>
</div>
<span class="t" style="left:206.4px;top:280px;font-size:13px;color:#000;letter-spacing:0.261px;">https:</span>
<span class="t" style="left:240.2px;top:280px;font-size:18.5px;color:#000;transform:skewX(-4deg);transform-origin:50% 60%;">/</span>
<span class="t" style="left:246.2px;top:280px;font-size:18.5px;color:#000;transform:skewX(-4deg);transform-origin:50% 60%;">/</span>
<span class="t" style="left:252.7px;top:280px;font-size:13px;color:#000;letter-spacing:0.167px;">preview.esv-digital.de</span>
<span class="t" style="left:380.6px;top:280px;font-size:18.5px;color:#000;transform:skewX(-4deg);transform-origin:50% 60%;">/</span>
<span class="t" style="left:386.6px;top:280px;font-size:13px;color:#000;letter-spacing:0.459px;">xhtml</span>
<span class="t" style="left:420.2px;top:280px;font-size:18.5px;color:#000;transform:skewX(-4deg);transform-origin:50% 60%;">/</span>
<span class="t" style="left:426.40000000000003px;top:280px;font-size:13px;color:#000;letter-spacing:0.249px;">document.jsf?alias=hduvp_</span>
<span class="t" style="left:590.0px;top:280px;font-size:13px;color:#000;letter-spacing:0.026px;">0035</span>
<span class="t" style="left:740.5px;top:280px;font-size:13px;letter-spacing:0.298px;color:#000;">Umweltschutz</span>
<span class="t" style="left:887.5px;top:280px;font-size:13px;letter-spacing:0.291px;color:#000;">Umweltvorsorge</span>
<span class="t" style="left:1034.5px;top:280px;font-size:13px;letter-spacing:0.060px;color:#000;">Rechtliche Grundlagen</span>
<div class="r" style="left:47px;top:299px;width:1165px;height:19px;background:#e2efda;"></div>
<div class="r" style="left:47px;top:318px;width:1165px;height:1px;background:#a9d08e;"></div>
<div class="r" style="left:10px;top:318px;width:36px;height:1px;background:#d9d9d9;"></div>
<div class="r" style="left:47px;top:299px;width:156px;height:19px;overflow:hidden;">
<span class="t" style="left:-4.800000000000002px;top:1px;font-size:13px;color:#000;letter-spacing:1.066px;">uvp_</span>
<span class="t" style="left:26.0px;top:1px;font-size:13px;color:#000;letter-spacing:0.779px;">vorwort</span>
</div>
<span class="t" style="left:206.4px;top:300px;font-size:13px;color:#000;letter-spacing:0.261px;">https:</span>
<span class="t" style="left:240.2px;top:300px;font-size:18.5px;color:#000;transform:skewX(-4deg);transform-origin:50% 60%;">/</span>
<span class="t" style="left:246.2px;top:300px;font-size:18.5px;color:#000;transform:skewX(-4deg);transform-origin:50% 60%;">/</span>
<span class="t" style="left:252.7px;top:300px;font-size:13px;color:#000;letter-spacing:0.167px;">preview.esv-digital.de</span>
<span class="t" style="left:380.6px;top:300px;font-size:18.5px;color:#000;transform:skewX(-4deg);transform-origin:50% 60%;">/</span>
<span class="t" style="left:386.6px;top:300px;font-size:13px;color:#000;letter-spacing:0.459px;">xhtml</span>
<span class="t" style="left:420.2px;top:300px;font-size:18.5px;color:#000;transform:skewX(-4deg);transform-origin:50% 60%;">/</span>
<span class="t" style="left:426.40000000000003px;top:300px;font-size:13px;color:#000;letter-spacing:0.249px;">document.jsf?alias=hduvp_</span>
<span class="t" style="left:590.0px;top:300px;font-size:13px;color:#000;letter-spacing:0.762px;">vorwort</span>
<div class="r" style="left:737px;top:319px;width:1px;height:19px;background:#d4d4d4;"></div>
<div class="r" style="left:884px;top:319px;width:1px;height:19px;background:#d4d4d4;"></div>
<div class="r" style="left:1031px;top:319px;width:1px;height:19px;background:#d4d4d4;"></div>
<div class="r" style="left:203px;top:319px;width:1px;height:19px;background:#d4d4d4;"></div>
<div class="r" style="left:47px;top:338px;width:1165px;height:1px;background:#a9d08e;"></div>
<div class="r" style="left:10px;top:338px;width:36px;height:1px;background:#d9d9d9;"></div>
<div class="r" style="left:47px;top:319px;width:156px;height:19px;overflow:hidden;">
<span class="t" style="left:-4.800000000000002px;top:1px;font-size:13px;color:#000;letter-spacing:1.066px;">uvp_</span>
<span class="t" style="left:26.0px;top:1px;font-size:13px;color:#000;letter-spacing:0.293px;">0030</span>
</div>
<span class="t" style="left:206.4px;top:320px;font-size:13px;color:#000;letter-spacing:0.261px;">https:</span>
<span class="t" style="left:240.2px;top:320px;font-size:18.5px;color:#000;transform:skewX(-4deg);transform-origin:50% 60%;">/</span>
<span class="t" style="left:246.2px;top:320px;font-size:18.5px;color:#000;transform:skewX(-4deg);transform-origin:50% 60%;">/</span>
<span class="t" style="left:252.7px;top:320px;font-size:13px;color:#000;letter-spacing:0.167px;">preview.esv-digital.de</span>
<span class="t" style="left:380.6px;top:320px;font-size:18.5px;color:#000;transform:skewX(-4deg);transform-origin:50% 60%;">/</span>
<span class="t" style="left:386.6px;top:320px;font-size:13px;color:#000;letter-spacing:0.459px;">xhtml</span>
<span class="t" style="left:420.2px;top:320px;font-size:18.5px;color:#000;transform:skewX(-4deg);transform-origin:50% 60%;">/</span>
<span class="t" style="left:426.40000000000003px;top:320px;font-size:13px;color:#000;letter-spacing:0.249px;">document.jsf?alias=hduvp_</span>
<span class="t" style="left:590.0px;top:320px;font-size:13px;color:#000;letter-spacing:0.026px;">0030</span>
<span class="t" style="left:740.5px;top:320px;font-size:13px;letter-spacing:0.298px;color:#000;">Umweltschutz</span>
<span class="t" style="left:887.5px;top:320px;font-size:13px;letter-spacing:0.291px;color:#000;">Umweltvorsorge</span>
<div class="r" style="left:47px;top:339px;width:1165px;height:19px;background:#e2efda;"></div>
<div class="r" style="left:47px;top:358px;width:1165px;height:1px;background:#a9d08e;"></div>
<div class="r" style="left:10px;top:358px;width:36px;height:1px;background:#d9d9d9;"></div>
<div class="r" style="left:47px;top:339px;width:156px;height:19px;overflow:hidden;">
<span class="t" style="left:-4.800000000000002px;top:1px;font-size:13px;color:#000;letter-spacing:1.066px;">uvp_</span>
<span class="t" style="left:26.0px;top:1px;font-size:13px;color:#000;letter-spacing:0.293px;">0030</span>
</div>
<span class="t" style="left:206.4px;top:340px;font-size:13px;color:#000;letter-spacing:0.261px;">https:</span>
<span class="t" style="left:240.2px;top:340px;font-size:18.5px;color:#000;transform:skewX(-4deg);transform-origin:50% 60%;">/</span>
<span class="t" style="left:246.2px;top:340px;font-size:18.5px;color:#000;transform:skewX(-4deg);transform-origin:50% 60%;">/</span>
<span class="t" style="left:252.7px;top:340px;font-size:13px;color:#000;letter-spacing:0.167px;">preview.esv-digital.de</span>
<span class="t" style="left:380.6px;top:340px;font-size:18.5px;color:#000;transform:skewX(-4deg);transform-origin:50% 60%;">/</span>
<span class="t" style="left:386.6px;top:340px;font-size:13px;color:#000;letter-spacing:0.459px;">xhtml</span>
<span class="t" style="left:420.2px;top:340px;font-size:18.5px;color:#000;transform:skewX(-4deg);transform-origin:50% 60%;">/</span>
<span class="t" style="left:426.40000000000003px;top:340px;font-size:13px;color:#000;letter-spacing:0.249px;">document.jsf?alias=hduvp_</span>
<span class="t" style="left:590.0px;top:340px;font-size:13px;color:#000;letter-spacing:0.026px;">0030</span>
<span class="t" style="left:740.5px;top:340px;font-size:13px;letter-spacing:0.298px;color:#000;">Umweltschutz</span>
<span class="t" style="left:887.5px;top:340px;font-size:13px;letter-spacing:0.291px;color:#000;">Umweltvorsorge</span>
<div class="r" style="left:737px;top:359px;width:1px;height:19px;background:#d4d4d4;"></div>
<div class="r" style="left:884px;top:359px;width:1px;height:19px;background:#d4d4d4;"></div>
<div class="r" style="left:1031px;top:359px;width:1px;height:19px;background:#d4d4d4;"></div>
<div class="r" style="left:203px;top:359px;width:1px;height:19px;background:#d4d4d4;"></div>
<div class="r" style="left:47px;top:378px;width:1165px;height:1px;background:#a9d08e;"></div>
<div class="r" style="left:10px;top:378px;width:36px;height:1px;background:#d9d9d9;"></div>
<div class="r" style="left:47px;top:359px;width:156px;height:19px;overflow:hidden;">
<span class="t" style="left:-4.800000000000002px;top:1px;font-size:13px;color:#000;letter-spacing:1.066px;">uvp_</span>
<span class="t" style="left:26.0px;top:1px;font-size:13px;color:#000;letter-spacing:0.117px;">sachregister</span>
</div>
<span class="t" style="left:206.4px;top:360px;font-size:13px;color:#000;letter-spacing:0.261px;">https:</span>
<span class="t" style="left:240.2px;top:360px;font-size:18.5px;color:#000;transform:skewX(-4deg);transform-origin:50% 60%;">/</span>
<span class="t" style="left:246.2px;top:360px;font-size:18.5px;color:#000;transform:skewX(-4deg);transform-origin:50% 60%;">/</span>
<span class="t" style="left:252.7px;top:360px;font-size:13px;color:#000;letter-spacing:0.167px;">preview.esv-digital.de</span>
<span class="t" style="left:380.6px;top:360px;font-size:18.5px;color:#000;transform:skewX(-4deg);transform-origin:50% 60%;">/</span>
<span class="t" style="left:386.6px;top:360px;font-size:13px;color:#000;letter-spacing:0.459px;">xhtml</span>
<span class="t" style="left:420.2px;top:360px;font-size:18.5px;color:#000;transform:skewX(-4deg);transform-origin:50% 60%;">/</span>
<span class="t" style="left:426.40000000000003px;top:360px;font-size:13px;color:#000;letter-spacing:0.249px;">document.jsf?alias=hduvp_</span>
<span class="t" style="left:590.0px;top:360px;font-size:13px;color:#000;letter-spacing:0.026px;">sachregister</span>
<div class="r" style="left:47px;top:379px;width:1165px;height:19px;background:#e2efda;"></div>
<div class="r" style="left:47px;top:398px;width:1165px;height:1px;background:#a9d08e;"></div>
<div class="r" style="left:10px;top:398px;width:36px;height:1px;background:#d9d9d9;"></div>
<div class="r" style="left:47px;top:379px;width:156px;height:19px;overflow:hidden;">
<span class="t" style="left:-4.800000000000002px;top:1px;font-size:13px;color:#000;letter-spacing:1.066px;">uvp_</span>
<span class="t" style="left:26.0px;top:1px;font-size:13px;color:#000;letter-spacing:0.293px;">0090</span>
</div>
<span class="t" style="left:206.4px;top:380px;font-size:13px;color:#000;letter-spacing:0.261px;">https:</span>
<span class="t" style="left:240.2px;top:380px;font-size:18.5px;color:#000;transform:skewX(-4deg);transform-origin:50% 60%;">/</span>
<span class="t" style="left:246.2px;top:380px;font-size:18.5px;color:#000;transform:skewX(-4deg);transform-origin:50% 60%;">/</span>
<span class="t" style="left:252.7px;top:380px;font-size:13px;color:#000;letter-spacing:0.167px;">preview.esv-digital.de</span>
<span class="t" style="left:380.6px;top:380px;font-size:18.5px;color:#000;transform:skewX(-4deg);transform-origin:50% 60%;">/</span>
<span class="t" style="left:386.6px;top:380px;font-size:13px;color:#000;letter-spacing:0.459px;">xhtml</span>
<span class="t" style="left:420.2px;top:380px;font-size:18.5px;color:#000;transform:skewX(-4deg);transform-origin:50% 60%;">/</span>
<span class="t" style="left:426.40000000000003px;top:380px;font-size:13px;color:#000;letter-spacing:0.249px;">document.jsf?alias=hduvp_</span>
<span class="t" style="left:590.0px;top:380px;font-size:13px;color:#000;letter-spacing:0.026px;">0090</span>
<div class="r" style="left:737px;top:399px;width:1px;height:19px;background:#d4d4d4;"></div>
<div class="r" style="left:884px;top:399px;width:1px;height:19px;background:#d4d4d4;"></div>
<div class="r" style="left:1031px;top:399px;width:1px;height:19px;background:#d4d4d4;"></div>
<div class="r" style="left:203px;top:399px;width:1px;height:19px;background:#d4d4d4;"></div>
<div class="r" style="left:47px;top:418px;width:1165px;height:1px;background:#a9d08e;"></div>
<div class="r" style="left:10px;top:418px;width:36px;height:1px;background:#d9d9d9;"></div>
<div class="r" style="left:47px;top:399px;width:156px;height:19px;overflow:hidden;">
<span class="t" style="left:-4.800000000000002px;top:1px;font-size:13px;color:#000;letter-spacing:1.066px;">uvp_</span>
<span class="t" style="left:26.0px;top:1px;font-size:13px;color:#000;letter-spacing:0.293px;">0100</span>
</div>
<span class="t" style="left:206.4px;top:400px;font-size:13px;color:#000;letter-spacing:0.261px;">https:</span>
<span class="t" style="left:240.2px;top:400px;font-size:18.5px;color:#000;transform:skewX(-4deg);transform-origin:50% 60%;">/</span>
<span class="t" style="left:246.2px;top:400px;font-size:18.5px;color:#000;transform:skewX(-4deg);transform-origin:50% 60%;">/</span>
<span class="t" style="left:252.7px;top:400px;font-size:13px;color:#000;letter-spacing:0.167px;">preview.esv-digital.de</span>
<span class="t" style="left:380.6px;top:400px;font-size:18.5px;color:#000;transform:skewX(-4deg);transform-origin:50% 60%;">/</span>
<span class="t" style="left:386.6px;top:400px;font-size:13px;color:#000;letter-spacing:0.459px;">xhtml</span>
<span class="t" style="left:420.2px;top:400px;font-size:18.5px;color:#000;transform:skewX(-4deg);transform-origin:50% 60%;">/</span>
<span class="t" style="left:426.40000000000003px;top:400px;font-size:13px;color:#000;letter-spacing:0.249px;">document.jsf?alias=hduvp_</span>
<span class="t" style="left:590.0px;top:400px;font-size:13px;color:#000;letter-spacing:0.026px;">0100</span>
<span class="t" style="left:740.5px;top:400px;font-size:13px;letter-spacing:0.298px;color:#000;">Umweltschutz</span>
<span class="t" style="left:887.5px;top:400px;font-size:13px;letter-spacing:0.291px;color:#000;">Umweltvorsorge</span>
<span class="t" style="left:1034.5px;top:400px;font-size:13px;letter-spacing:0.060px;color:#000;">Rechtliche Grundlagen</span>
<div class="r" style="left:47px;top:419px;width:1165px;height:19px;background:#e2efda;"></div>
<div class="r" style="left:47px;top:438px;width:1165px;height:1px;background:#a9d08e;"></div>
<div class="r" style="left:10px;top:438px;width:36px;height:1px;background:#d9d9d9;"></div>
<div class="r" style="left:47px;top:419px;width:156px;height:19px;overflow:hidden;">
<span class="t" style="left:-4.800000000000002px;top:1px;font-size:13px;color:#000;letter-spacing:1.066px;">uvp_</span>
<span class="t" style="left:26.0px;top:1px;font-size:13px;color:#000;letter-spacing:0.293px;">0210</span>
</div>
<span class="t" style="left:206.4px;top:420px;font-size:13px;color:#000;letter-spacing:0.261px;">https:</span>
<span class="t" style="left:240.2px;top:420px;font-size:18.5px;color:#000;transform:skewX(-4deg);transform-origin:50% 60%;">/</span>
<span class="t" style="left:246.2px;top:420px;font-size:18.5px;color:#000;transform:skewX(-4deg);transform-origin:50% 60%;">/</span>
<span class="t" style="left:252.7px;top:420px;font-size:13px;color:#000;letter-spacing:0.167px;">preview.esv-digital.de</span>
<span class="t" style="left:380.6px;top:420px;font-size:18.5px;color:#000;transform:skewX(-4deg);transform-origin:50% 60%;">/</span>
<span class="t" style="left:386.6px;top:420px;font-size:13px;color:#000;letter-spacing:0.459px;">xhtml</span>
<span class="t" style="left:420.2px;top:420px;font-size:18.5px;color:#000;transform:skewX(-4deg);transform-origin:50% 60%;">/</span>
<span class="t" style="left:426.40000000000003px;top:420px;font-size:13px;color:#000;letter-spacing:0.249px;">document.jsf?alias=hduvp_</span>
<span class="t" style="left:590.0px;top:420px;font-size:13px;color:#000;letter-spacing:0.026px;">0210</span>
<span class="t" style="left:740.5px;top:420px;font-size:13px;letter-spacing:0.298px;color:#000;">Umweltschutz</span>
<span class="t" style="left:887.5px;top:420px;font-size:13px;letter-spacing:0.291px;color:#000;">Umweltvorsorge</span>
<span class="t" style="left:1034.5px;top:420px;font-size:13px;letter-spacing:0.060px;color:#000;">Rechtliche Grundlagen</span>
<div class="r" style="left:737px;top:439px;width:1px;height:19px;background:#d4d4d4;"></div>
<div class="r" style="left:884px;top:439px;width:1px;height:19px;background:#d4d4d4;"></div>
<div class="r" style="left:1031px;top:439px;width:1px;height:19px;background:#d4d4d4;"></div>
<div class="r" style="left:203px;top:439px;width:1px;height:19px;background:#d4d4d4;"></div>
<div class="r" style="left:47px;top:458px;width:1165px;height:1px;background:#a9d08e;"></div>
<div class="r" style="left:10px;top:458px;width:36px;height:1px;background:#d9d9d9;"></div>
<div class="r" style="left:47px;top:439px;width:156px;height:19px;overflow:hidden;">
<span class="t" style="left:-4.800000000000002px;top:1px;font-size:13px;color:#000;letter-spacing:1.066px;">uvp_</span>
<span class="t" style="left:26.0px;top:1px;font-size:13px;color:#000;letter-spacing:0.293px;">0505</span>
</div>
<span class="t" style="left:206.4px;top:440px;font-size:13px;color:#000;letter-spacing:0.261px;">https:</span>
<span class="t" style="left:240.2px;top:440px;font-size:18.5px;color:#000;transform:skewX(-4deg);transform-origin:50% 60%;">/</span>
<span class="t" style="left:246.2px;top:440px;font-size:18.5px;color:#000;transform:skewX(-4deg);transform-origin:50% 60%;">/</span>
<span class="t" style="left:252.7px;top:440px;font-size:13px;color:#000;letter-spacing:0.167px;">preview.esv-digital.de</span>
<span class="t" style="left:380.6px;top:440px;font-size:18.5px;color:#000;transform:skewX(-4deg);transform-origin:50% 60%;">/</span>
<span class="t" style="left:386.6px;top:440px;font-size:13px;color:#000;letter-spacing:0.459px;">xhtml</span>
<span class="t" style="left:420.2px;top:440px;font-size:18.5px;color:#000;transform:skewX(-4deg);transform-origin:50% 60%;">/</span>
<span class="t" style="left:426.40000000000003px;top:440px;font-size:13px;color:#000;letter-spacing:0.249px;">document.jsf?alias=hduvp_</span>
<span class="t" style="left:590.0px;top:440px;font-size:13px;color:#000;letter-spacing:0.026px;">0505</span>
<span class="t" style="left:740.5px;top:440px;font-size:13px;letter-spacing:0.298px;color:#000;">Umweltschutz</span>
<span class="t" style="left:887.5px;top:440px;font-size:13px;letter-spacing:0.291px;color:#000;">Umweltvorsorge</span>
<span class="t" style="left:1034.5px;top:440px;font-size:13px;letter-spacing:0.060px;color:#000;">Rechtliche Grundlagen</span>
<div class="r" style="left:47px;top:459px;width:1165px;height:19px;background:#e2efda;"></div>
<div class="r" style="left:47px;top:478px;width:1165px;height:1px;background:#a9d08e;"></div>
<div class="r" style="left:10px;top:478px;width:36px;height:1px;background:#d9d9d9;"></div>
<div class="r" style="left:47px;top:459px;width:156px;height:19px;overflow:hidden;">
<span class="t" style="left:-4.800000000000002px;top:1px;font-size:13px;color:#000;letter-spacing:1.066px;">uvp_</span>
<span class="t" style="left:26.0px;top:1px;font-size:13px;color:#000;letter-spacing:0.293px;">0506</span>
</div>
<span class="t" style="left:206.4px;top:460px;font-size:13px;color:#000;letter-spacing:0.261px;">https:</span>
<span class="t" style="left:240.2px;top:460px;font-size:18.5px;color:#000;transform:skewX(-4deg);transform-origin:50% 60%;">/</span>
<span class="t" style="left:246.2px;top:460px;font-size:18.5px;color:#000;transform:skewX(-4deg);transform-origin:50% 60%;">/</span>
<span class="t" style="left:252.7px;top:460px;font-size:13px;color:#000;letter-spacing:0.167px;">preview.esv-digital.de</span>
<span class="t" style="left:380.6px;top:460px;font-size:18.5px;color:#000;transform:skewX(-4deg);transform-origin:50% 60%;">/</span>
<span class="t" style="left:386.6px;top:460px;font-size:13px;color:#000;letter-spacing:0.459px;">xhtml</span>
<span class="t" style="left:420.2px;top:460px;font-size:18.5px;color:#000;transform:skewX(-4deg);transform-origin:50% 60%;">/</span>
<span class="t" style="left:426.40000000000003px;top:460px;font-size:13px;color:#000;letter-spacing:0.249px;">document.jsf?alias=hduvp_</span>
<span class="t" style="left:590.0px;top:460px;font-size:13px;color:#000;letter-spacing:0.026px;">0506</span>
<span class="t" style="left:740.5px;top:460px;font-size:13px;letter-spacing:0.298px;color:#000;">Umweltschutz</span>
<span class="t" style="left:887.5px;top:460px;font-size:13px;letter-spacing:0.291px;color:#000;">Umweltvorsorge</span>
<span class="t" style="left:1034.5px;top:460px;font-size:13px;letter-spacing:0.060px;color:#000;">Rechtliche Grundlagen</span>
<div class="r" style="left:737px;top:479px;width:1px;height:19px;background:#d4d4d4;"></div>
<div class="r" style="left:884px;top:479px;width:1px;height:19px;background:#d4d4d4;"></div>
<div class="r" style="left:1031px;top:479px;width:1px;height:19px;background:#d4d4d4;"></div>
<div class="r" style="left:203px;top:479px;width:1px;height:19px;background:#d4d4d4;"></div>
<div class="r" style="left:47px;top:498px;width:1165px;height:1px;background:#a9d08e;"></div>
<div class="r" style="left:10px;top:498px;width:36px;height:1px;background:#d9d9d9;"></div>
<div class="r" style="left:47px;top:479px;width:156px;height:19px;overflow:hidden;">
<span class="t" style="left:-4.800000000000002px;top:1px;font-size:13px;color:#000;letter-spacing:1.066px;">uvp_</span>
<span class="t" style="left:26.0px;top:1px;font-size:13px;color:#000;letter-spacing:0.293px;">0507</span>
</div>
<span class="t" style="left:206.4px;top:480px;font-size:13px;color:#000;letter-spacing:0.261px;">https:</span>
<span class="t" style="left:240.2px;top:480px;font-size:18.5px;color:#000;transform:skewX(-4deg);transform-origin:50% 60%;">/</span>
<span class="t" style="left:246.2px;top:480px;font-size:18.5px;color:#000;transform:skewX(-4deg);transform-origin:50% 60%;">/</span>
<span class="t" style="left:252.7px;top:480px;font-size:13px;color:#000;letter-spacing:0.167px;">preview.esv-digital.de</span>
<span class="t" style="left:380.6px;top:480px;font-size:18.5px;color:#000;transform:skewX(-4deg);transform-origin:50% 60%;">/</span>
<span class="t" style="left:386.6px;top:480px;font-size:13px;color:#000;letter-spacing:0.459px;">xhtml</span>
<span class="t" style="left:420.2px;top:480px;font-size:18.5px;color:#000;transform:skewX(-4deg);transform-origin:50% 60%;">/</span>
<span class="t" style="left:426.40000000000003px;top:480px;font-size:13px;color:#000;letter-spacing:0.249px;">document.jsf?alias=hduvp_</span>
<span class="t" style="left:590.0px;top:480px;font-size:13px;color:#000;letter-spacing:0.026px;">0507</span>
<span class="t" style="left:740.5px;top:480px;font-size:13px;letter-spacing:0.298px;color:#000;">Umweltschutz</span>
<span class="t" style="left:887.5px;top:480px;font-size:13px;letter-spacing:0.291px;color:#000;">Umweltvorsorge</span>
<span class="t" style="left:1034.5px;top:480px;font-size:13px;letter-spacing:0.060px;color:#000;">Rechtliche Grundlagen</span>
<div class="r" style="left:47px;top:499px;width:1165px;height:19px;background:#e2efda;"></div>
<div class="r" style="left:47px;top:518px;width:1165px;height:1px;background:#a9d08e;"></div>
<div class="r" style="left:10px;top:518px;width:36px;height:1px;background:#d9d9d9;"></div>
<div class="r" style="left:47px;top:499px;width:156px;height:19px;overflow:hidden;">
<span class="t" style="left:-4.800000000000002px;top:1px;font-size:13px;color:#000;letter-spacing:1.066px;">uvp_</span>
<span class="t" style="left:26.0px;top:1px;font-size:13px;color:#000;letter-spacing:0.293px;">0520</span>
</div>
<span class="t" style="left:206.4px;top:500px;font-size:13px;color:#000;letter-spacing:0.261px;">https:</span>
<span class="t" style="left:240.2px;top:500px;font-size:18.5px;color:#000;transform:skewX(-4deg);transform-origin:50% 60%;">/</span>
<span class="t" style="left:246.2px;top:500px;font-size:18.5px;color:#000;transform:skewX(-4deg);transform-origin:50% 60%;">/</span>
<span class="t" style="left:252.7px;top:500px;font-size:13px;color:#000;letter-spacing:0.167px;">preview.esv-digital.de</span>
<span class="t" style="left:380.6px;top:500px;font-size:18.5px;color:#000;transform:skewX(-4deg);transform-origin:50% 60%;">/</span>
<span class="t" style="left:386.6px;top:500px;font-size:13px;color:#000;letter-spacing:0.459px;">xhtml</span>
<span class="t" style="left:420.2px;top:500px;font-size:18.5px;color:#000;transform:skewX(-4deg);transform-origin:50% 60%;">/</span>
<span class="t" style="left:426.40000000000003px;top:500px;font-size:13px;color:#000;letter-spacing:0.249px;">document.jsf?alias=hduvp_</span>
<span class="t" style="left:590.0px;top:500px;font-size:13px;color:#000;letter-spacing:0.026px;">0520</span>
<span class="t" style="left:740.5px;top:500px;font-size:13px;letter-spacing:0.298px;color:#000;">Umweltschutz</span>
<span class="t" style="left:887.5px;top:500px;font-size:13px;letter-spacing:0.291px;color:#000;">Umweltvorsorge</span>
<span class="t" style="left:1034.5px;top:500px;font-size:13px;letter-spacing:0.060px;color:#000;">Rechtliche Grundlagen</span>
<div class="r" style="left:737px;top:519px;width:1px;height:19px;background:#d4d4d4;"></div>
<div class="r" style="left:884px;top:519px;width:1px;height:19px;background:#d4d4d4;"></div>
<div class="r" style="left:1031px;top:519px;width:1px;height:19px;background:#d4d4d4;"></div>
<div class="r" style="left:203px;top:519px;width:1px;height:19px;background:#d4d4d4;"></div>
<div class="r" style="left:47px;top:538px;width:1165px;height:1px;background:#a9d08e;"></div>
<div class="r" style="left:10px;top:538px;width:36px;height:1px;background:#d9d9d9;"></div>
<div class="r" style="left:47px;top:519px;width:156px;height:19px;overflow:hidden;">
<span class="t" style="left:-4.800000000000002px;top:1px;font-size:13px;color:#000;letter-spacing:1.066px;">uvp_</span>
<span class="t" style="left:26.0px;top:1px;font-size:13px;color:#000;letter-spacing:0.293px;">0540</span>
</div>
<span class="t" style="left:206.4px;top:520px;font-size:13px;color:#000;letter-spacing:0.261px;">https:</span>
<span class="t" style="left:240.2px;top:520px;font-size:18.5px;color:#000;transform:skewX(-4deg);transform-origin:50% 60%;">/</span>
<span class="t" style="left:246.2px;top:520px;font-size:18.5px;color:#000;transform:skewX(-4deg);transform-origin:50% 60%;">/</span>
<span class="t" style="left:252.7px;top:520px;font-size:13px;color:#000;letter-spacing:0.167px;">preview.esv-digital.de</span>
<span class="t" style="left:380.6px;top:520px;font-size:18.5px;color:#000;transform:skewX(-4deg);transform-origin:50% 60%;">/</span>
<span class="t" style="left:386.6px;top:520px;font-size:13px;color:#000;letter-spacing:0.459px;">xhtml</span>
<span class="t" style="left:420.2px;top:520px;font-size:18.5px;color:#000;transform:skewX(-4deg);transform-origin:50% 60%;">/</span>
<span class="t" style="left:426.40000000000003px;top:520px;font-size:13px;color:#000;letter-spacing:0.249px;">document.jsf?alias=hduvp_</span>
<span class="t" style="left:590.0px;top:520px;font-size:13px;color:#000;letter-spacing:0.026px;">0540</span>
<span class="t" style="left:740.5px;top:520px;font-size:13px;letter-spacing:0.298px;color:#000;">Umweltschutz</span>
<span class="t" style="left:887.5px;top:520px;font-size:13px;letter-spacing:0.291px;color:#000;">Umweltvorsorge</span>
<span class="t" style="left:1034.5px;top:520px;font-size:13px;letter-spacing:0.060px;color:#000;">Rechtliche Grundlagen</span>
<div class="r" style="left:47px;top:539px;width:1165px;height:19px;background:#e2efda;"></div>
<div class="r" style="left:47px;top:558px;width:1165px;height:1px;background:#a9d08e;"></div>
<div class="r" style="left:10px;top:558px;width:36px;height:1px;background:#d9d9d9;"></div>
<div class="r" style="left:47px;top:539px;width:156px;height:19px;overflow:hidden;">
<span class="t" style="left:-4.800000000000002px;top:1px;font-size:13px;color:#000;letter-spacing:1.066px;">uvp_</span>
<span class="t" style="left:26.0px;top:1px;font-size:13px;color:#000;letter-spacing:0.149px;">0600_para001</span>
</div>
<span class="t" style="left:206.4px;top:540px;font-size:13px;color:#000;letter-spacing:0.261px;">https:</span>
<span class="t" style="left:240.2px;top:540px;font-size:18.5px;color:#000;transform:skewX(-4deg);transform-origin:50% 60%;">/</span>
<span class="t" style="left:246.2px;top:540px;font-size:18.5px;color:#000;transform:skewX(-4deg);transform-origin:50% 60%;">/</span>
<span class="t" style="left:252.7px;top:540px;font-size:13px;color:#000;letter-spacing:0.167px;">preview.esv-digital.de</span>
<span class="t" style="left:380.6px;top:540px;font-size:18.5px;color:#000;transform:skewX(-4deg);transform-origin:50% 60%;">/</span>
<span class="t" style="left:386.6px;top:540px;font-size:13px;color:#000;letter-spacing:0.459px;">xhtml</span>
<span class="t" style="left:420.2px;top:540px;font-size:18.5px;color:#000;transform:skewX(-4deg);transform-origin:50% 60%;">/</span>
<span class="t" style="left:426.40000000000003px;top:540px;font-size:13px;color:#000;letter-spacing:0.249px;">document.jsf?alias=hduvp_</span>
<span class="t" style="left:590.0px;top:540px;font-size:13px;color:#000;letter-spacing:0.140px;">0600_para001</span>
<div class="r" style="left:737px;top:559px;width:1px;height:19px;background:#d4d4d4;"></div>
<div class="r" style="left:884px;top:559px;width:1px;height:19px;background:#d4d4d4;"></div>
<div class="r" style="left:1031px;top:559px;width:1px;height:19px;background:#d4d4d4;"></div>
<div class="r" style="left:203px;top:559px;width:1px;height:19px;background:#d4d4d4;"></div>
<div class="r" style="left:47px;top:578px;width:1165px;height:1px;background:#a9d08e;"></div>
<div class="r" style="left:10px;top:578px;width:36px;height:1px;background:#d9d9d9;"></div>
<div class="r" style="left:47px;top:559px;width:156px;height:19px;overflow:hidden;">
<span class="t" style="left:-4.800000000000002px;top:1px;font-size:13px;color:#000;letter-spacing:1.066px;">uvp_</span>
<span class="t" style="left:26.0px;top:1px;font-size:13px;color:#000;letter-spacing:0.149px;">0600_para010</span>
</div>
<span class="t" style="left:206.4px;top:560px;font-size:13px;color:#000;letter-spacing:0.261px;">https:</span>
<span class="t" style="left:240.2px;top:560px;font-size:18.5px;color:#000;transform:skewX(-4deg);transform-origin:50% 60%;">/</span>
<span class="t" style="left:246.2px;top:560px;font-size:18.5px;color:#000;transform:skewX(-4deg);transform-origin:50% 60%;">/</span>
<span class="t" style="left:252.7px;top:560px;font-size:13px;color:#000;letter-spacing:0.167px;">preview.esv-digital.de</span>
<span class="t" style="left:380.6px;top:560px;font-size:18.5px;color:#000;transform:skewX(-4deg);transform-origin:50% 60%;">/</span>
<span class="t" style="left:386.6px;top:560px;font-size:13px;color:#000;letter-spacing:0.459px;">xhtml</span>
<span class="t" style="left:420.2px;top:560px;font-size:18.5px;color:#000;transform:skewX(-4deg);transform-origin:50% 60%;">/</span>
<span class="t" style="left:426.40000000000003px;top:560px;font-size:13px;color:#000;letter-spacing:0.249px;">document.jsf?alias=hduvp_</span>
<span class="t" style="left:590.0px;top:560px;font-size:13px;color:#000;letter-spacing:0.140px;">0600_para010</span>
<div class="r" style="left:47px;top:579px;width:1165px;height:19px;background:#e2efda;"></div>
<div class="r" style="left:47px;top:598px;width:1165px;height:1px;background:#a9d08e;"></div>
<div class="r" style="left:10px;top:598px;width:36px;height:1px;background:#d9d9d9;"></div>
<div class="r" style="left:47px;top:579px;width:156px;height:19px;overflow:hidden;">
<span class="t" style="left:-4.800000000000002px;top:1px;font-size:13px;color:#000;letter-spacing:1.066px;">uvp_</span>
<span class="t" style="left:26.0px;top:1px;font-size:13px;color:#000;letter-spacing:0.236px;">0600_para011</span>
</div>
<span class="t" style="left:206.4px;top:580px;font-size:13px;color:#000;letter-spacing:0.261px;">https:</span>
<span class="t" style="left:240.2px;top:580px;font-size:18.5px;color:#000;transform:skewX(-4deg);transform-origin:50% 60%;">/</span>
<span class="t" style="left:246.2px;top:580px;font-size:18.5px;color:#000;transform:skewX(-4deg);transform-origin:50% 60%;">/</span>
<span class="t" style="left:252.7px;top:580px;font-size:13px;color:#000;letter-spacing:0.167px;">preview.esv-digital.de</span>
<span class="t" style="left:380.6px;top:580px;font-size:18.5px;color:#000;transform:skewX(-4deg);transform-origin:50% 60%;">/</span>
<span class="t" style="left:386.6px;top:580px;font-size:13px;color:#000;letter-spacing:0.459px;">xhtml</span>
<span class="t" style="left:420.2px;top:580px;font-size:18.5px;color:#000;transform:skewX(-4deg);transform-origin:50% 60%;">/</span>
<span class="t" style="left:426.40000000000003px;top:580px;font-size:13px;color:#000;letter-spacing:0.249px;">document.jsf?alias=hduvp_</span>
<span class="t" style="left:590.0px;top:580px;font-size:13px;color:#000;letter-spacing:0.227px;">0600_para011</span>
<div class="r" style="left:737px;top:599px;width:1px;height:19px;background:#d4d4d4;"></div>
<div class="r" style="left:884px;top:599px;width:1px;height:19px;background:#d4d4d4;"></div>
<div class="r" style="left:1031px;top:599px;width:1px;height:19px;background:#d4d4d4;"></div>
<div class="r" style="left:203px;top:599px;width:1px;height:19px;background:#d4d4d4;"></div>
<div class="r" style="left:47px;top:618px;width:1165px;height:1px;background:#a9d08e;"></div>
<div class="r" style="left:10px;top:618px;width:36px;height:1px;background:#d9d9d9;"></div>
<div class="r" style="left:47px;top:599px;width:156px;height:19px;overflow:hidden;">
<span class="t" style="left:-4.800000000000002px;top:1px;font-size:13px;color:#000;letter-spacing:1.066px;">uvp_</span>
<span class="t" style="left:26.0px;top:1px;font-size:13px;color:#000;letter-spacing:0.149px;">0600_para012</span>
</div>
<span class="t" style="left:206.4px;top:600px;font-size:13px;color:#000;letter-spacing:0.261px;">https:</span>
<span class="t" style="left:240.2px;top:600px;font-size:18.5px;color:#000;transform:skewX(-4deg);transform-origin:50% 60%;">/</span>
<span class="t" style="left:246.2px;top:600px;font-size:18.5px;color:#000;transform:skewX(-4deg);transform-origin:50% 60%;">/</span>
<span class="t" style="left:252.7px;top:600px;font-size:13px;color:#000;letter-spacing:0.167px;">preview.esv-digital.de</span>
<span class="t" style="left:380.6px;top:600px;font-size:18.5px;color:#000;transform:skewX(-4deg);transform-origin:50% 60%;">/</span>
<span class="t" style="left:386.6px;top:600px;font-size:13px;color:#000;letter-spacing:0.459px;">xhtml</span>
<span class="t" style="left:420.2px;top:600px;font-size:18.5px;color:#000;transform:skewX(-4deg);transform-origin:50% 60%;">/</span>
<span class="t" style="left:426.40000000000003px;top:600px;font-size:13px;color:#000;letter-spacing:0.249px;">document.jsf?alias=hduvp_</span>
<span class="t" style="left:590.0px;top:600px;font-size:13px;color:#000;letter-spacing:0.140px;">0600_para012</span>
<div class="r" style="left:47px;top:619px;width:1165px;height:19px;background:#e2efda;"></div>
<div class="r" style="left:47px;top:638px;width:1165px;height:1px;background:#a9d08e;"></div>
<div class="r" style="left:10px;top:638px;width:36px;height:1px;background:#d9d9d9;"></div>
<div class="r" style="left:47px;top:619px;width:156px;height:19px;overflow:hidden;">
<span class="t" style="left:-4.800000000000002px;top:1px;font-size:13px;color:#000;letter-spacing:1.066px;">uvp_</span>
<span class="t" style="left:26.0px;top:1px;font-size:13px;color:#000;letter-spacing:0.149px;">0600_para013</span>
</div>
<span class="t" style="left:206.4px;top:620px;font-size:13px;color:#000;letter-spacing:0.261px;">https:</span>
<span class="t" style="left:240.2px;top:620px;font-size:18.5px;color:#000;transform:skewX(-4deg);transform-origin:50% 60%;">/</span>
<span class="t" style="left:246.2px;top:620px;font-size:18.5px;color:#000;transform:skewX(-4deg);transform-origin:50% 60%;">/</span>
<span class="t" style="left:252.7px;top:620px;font-size:13px;color:#000;letter-spacing:0.167px;">preview.esv-digital.de</span>
<span class="t" style="left:380.6px;top:620px;font-size:18.5px;color:#000;transform:skewX(-4deg);transform-origin:50% 60%;">/</span>
<span class="t" style="left:386.6px;top:620px;font-size:13px;color:#000;letter-spacing:0.459px;">xhtml</span>
<span class="t" style="left:420.2px;top:620px;font-size:18.5px;color:#000;transform:skewX(-4deg);transform-origin:50% 60%;">/</span>
<span class="t" style="left:426.40000000000003px;top:620px;font-size:13px;color:#000;letter-spacing:0.249px;">document.jsf?alias=hduvp_</span>
<span class="t" style="left:590.0px;top:620px;font-size:13px;color:#000;letter-spacing:0.140px;">0600_para013</span>
<div class="r" style="left:737px;top:639px;width:1px;height:19px;background:#d4d4d4;"></div>
<div class="r" style="left:884px;top:639px;width:1px;height:19px;background:#d4d4d4;"></div>
<div class="r" style="left:1031px;top:639px;width:1px;height:19px;background:#d4d4d4;"></div>
<div class="r" style="left:203px;top:639px;width:1px;height:19px;background:#d4d4d4;"></div>
<div class="r" style="left:47px;top:658px;width:1165px;height:1px;background:#a9d08e;"></div>
<div class="r" style="left:10px;top:658px;width:36px;height:1px;background:#d9d9d9;"></div>
<div class="r" style="left:47px;top:639px;width:156px;height:19px;overflow:hidden;">
<span class="t" style="left:-4.800000000000002px;top:1px;font-size:13px;color:#000;letter-spacing:1.066px;">uvp_</span>
<span class="t" style="left:26.0px;top:1px;font-size:13px;color:#000;letter-spacing:0.149px;">0600_para014</span>
</div>
<span class="t" style="left:206.4px;top:640px;font-size:13px;color:#000;letter-spacing:0.261px;">https:</span>
<span class="t" style="left:240.2px;top:640px;font-size:18.5px;color:#000;transform:skewX(-4deg);transform-origin:50% 60%;">/</span>
<span class="t" style="left:246.2px;top:640px;font-size:18.5px;color:#000;transform:skewX(-4deg);transform-origin:50% 60%;">/</span>
<span class="t" style="left:252.7px;top:640px;font-size:13px;color:#000;letter-spacing:0.167px;">preview.esv-digital.de</span>
<span class="t" style="left:380.6px;top:640px;font-size:18.5px;color:#000;transform:skewX(-4deg);transform-origin:50% 60%;">/</span>
<span class="t" style="left:386.6px;top:640px;font-size:13px;color:#000;letter-spacing:0.459px;">xhtml</span>
<span class="t" style="left:420.2px;top:640px;font-size:18.5px;color:#000;transform:skewX(-4deg);transform-origin:50% 60%;">/</span>
<span class="t" style="left:426.40000000000003px;top:640px;font-size:13px;color:#000;letter-spacing:0.249px;">document.jsf?alias=hduvp_</span>
<span class="t" style="left:590.0px;top:640px;font-size:13px;color:#000;letter-spacing:0.140px;">0600_para014</span>
<div class="r" style="left:47px;top:659px;width:1165px;height:19px;background:#e2efda;"></div>
<div class="r" style="left:47px;top:678px;width:1165px;height:1px;background:#a9d08e;"></div>
<div class="r" style="left:10px;top:678px;width:36px;height:1px;background:#d9d9d9;"></div>
<div class="r" style="left:47px;top:659px;width:156px;height:19px;overflow:hidden;">
<span class="t" style="left:-4.800000000000002px;top:1px;font-size:13px;color:#000;letter-spacing:1.066px;">uvp_</span>
<span class="t" style="left:26.0px;top:1px;font-size:13px;color:#000;letter-spacing:0.149px;">0600_para015</span>
</div>
<span class="t" style="left:206.4px;top:660px;font-size:13px;color:#000;letter-spacing:0.261px;">https:</span>
<span class="t" style="left:240.2px;top:660px;font-size:18.5px;color:#000;transform:skewX(-4deg);transform-origin:50% 60%;">/</span>
<span class="t" style="left:246.2px;top:660px;font-size:18.5px;color:#000;transform:skewX(-4deg);transform-origin:50% 60%;">/</span>
<span class="t" style="left:252.7px;top:660px;font-size:13px;color:#000;letter-spacing:0.167px;">preview.esv-digital.de</span>
<span class="t" style="left:380.6px;top:660px;font-size:18.5px;color:#000;transform:skewX(-4deg);transform-origin:50% 60%;">/</span>
<span class="t" style="left:386.6px;top:660px;font-size:13px;color:#000;letter-spacing:0.459px;">xhtml</span>
<span class="t" style="left:420.2px;top:660px;font-size:18.5px;color:#000;transform:skewX(-4deg);transform-origin:50% 60%;">/</span>
<span class="t" style="left:426.40000000000003px;top:660px;font-size:13px;color:#000;letter-spacing:0.249px;">document.jsf?alias=hduvp_</span>
<span class="t" style="left:590.0px;top:660px;font-size:13px;color:#000;letter-spacing:0.140px;">0600_para015</span>
<div class="r" style="left:737px;top:679px;width:1px;height:19px;background:#d4d4d4;"></div>
<div class="r" style="left:884px;top:679px;width:1px;height:19px;background:#d4d4d4;"></div>
<div class="r" style="left:1031px;top:679px;width:1px;height:19px;background:#d4d4d4;"></div>
<div class="r" style="left:203px;top:679px;width:1px;height:19px;background:#d4d4d4;"></div>
<div class="r" style="left:47px;top:698px;width:1165px;height:1px;background:#a9d08e;"></div>
<div class="r" style="left:10px;top:698px;width:36px;height:1px;background:#d9d9d9;"></div>
<div class="r" style="left:47px;top:679px;width:156px;height:19px;overflow:hidden;">
<span class="t" style="left:-4.800000000000002px;top:1px;font-size:13px;color:#000;letter-spacing:1.066px;">uvp_</span>
<span class="t" style="left:26.0px;top:1px;font-size:13px;color:#000;letter-spacing:0.149px;">0600_para016</span>
</div>
<span class="t" style="left:206.4px;top:680px;font-size:13px;color:#000;letter-spacing:0.261px;">https:</span>
<span class="t" style="left:240.2px;top:680px;font-size:18.5px;color:#000;transform:skewX(-4deg);transform-origin:50% 60%;">/</span>
<span class="t" style="left:246.2px;top:680px;font-size:18.5px;color:#000;transform:skewX(-4deg);transform-origin:50% 60%;">/</span>
<span class="t" style="left:252.7px;top:680px;font-size:13px;color:#000;letter-spacing:0.167px;">preview.esv-digital.de</span>
<span class="t" style="left:380.6px;top:680px;font-size:18.5px;color:#000;transform:skewX(-4deg);transform-origin:50% 60%;">/</span>
<span class="t" style="left:386.6px;top:680px;font-size:13px;color:#000;letter-spacing:0.459px;">xhtml</span>
<span class="t" style="left:420.2px;top:680px;font-size:18.5px;color:#000;transform:skewX(-4deg);transform-origin:50% 60%;">/</span>
<span class="t" style="left:426.40000000000003px;top:680px;font-size:13px;color:#000;letter-spacing:0.249px;">document.jsf?alias=hduvp_</span>
<span class="t" style="left:590.0px;top:680px;font-size:13px;color:#000;letter-spacing:0.140px;">0600_para016</span>
<div class="r" style="left:47px;top:699px;width:1165px;height:19px;background:#e2efda;"></div>
<div class="r" style="left:47px;top:718px;width:1165px;height:1px;background:#a9d08e;"></div>
<div class="r" style="left:10px;top:718px;width:36px;height:1px;background:#d9d9d9;"></div>
<div class="r" style="left:47px;top:699px;width:156px;height:19px;overflow:hidden;">
<span class="t" style="left:-4.800000000000002px;top:1px;font-size:13px;color:#000;letter-spacing:1.066px;">uvp_</span>
<span class="t" style="left:26.0px;top:1px;font-size:13px;color:#000;letter-spacing:0.149px;">0600_para017</span>
</div>
<span class="t" style="left:206.4px;top:700px;font-size:13px;color:#000;letter-spacing:0.261px;">https:</span>
<span class="t" style="left:240.2px;top:700px;font-size:18.5px;color:#000;transform:skewX(-4deg);transform-origin:50% 60%;">/</span>
<span class="t" style="left:246.2px;top:700px;font-size:18.5px;color:#000;transform:skewX(-4deg);transform-origin:50% 60%;">/</span>
<span class="t" style="left:252.7px;top:700px;font-size:13px;color:#000;letter-spacing:0.167px;">preview.esv-digital.de</span>
<span class="t" style="left:380.6px;top:700px;font-size:18.5px;color:#000;transform:skewX(-4deg);transform-origin:50% 60%;">/</span>
<span class="t" style="left:386.6px;top:700px;font-size:13px;color:#000;letter-spacing:0.459px;">xhtml</span>
<span class="t" style="left:420.2px;top:700px;font-size:18.5px;color:#000;transform:skewX(-4deg);transform-origin:50% 60%;">/</span>
<span class="t" style="left:426.40000000000003px;top:700px;font-size:13px;color:#000;letter-spacing:0.249px;">document.jsf?alias=hduvp_</span>
<span class="t" style="left:590.0px;top:700px;font-size:13px;color:#000;letter-spacing:0.140px;">0600_para017</span>
<div class="r" style="left:737px;top:719px;width:1px;height:19px;background:#d4d4d4;"></div>
<div class="r" style="left:884px;top:719px;width:1px;height:19px;background:#d4d4d4;"></div>
<div class="r" style="left:1031px;top:719px;width:1px;height:19px;background:#d4d4d4;"></div>
<div class="r" style="left:203px;top:719px;width:1px;height:19px;background:#d4d4d4;"></div>
<div class="r" style="left:47px;top:738px;width:1165px;height:1px;background:#a9d08e;"></div>
<div class="r" style="left:10px;top:738px;width:36px;height:1px;background:#d9d9d9;"></div>
<div class="r" style="left:47px;top:719px;width:156px;height:19px;overflow:hidden;">
<span class="t" style="left:-4.800000000000002px;top:1px;font-size:13px;color:#000;letter-spacing:1.066px;">uvp_</span>
<span class="t" style="left:26.0px;top:1px;font-size:13px;color:#000;letter-spacing:0.149px;">0600_para018</span>
</div>
<span class="t" style="left:206.4px;top:720px;font-size:13px;color:#000;letter-spacing:0.261px;">https:</span>
<span class="t" style="left:240.2px;top:720px;font-size:18.5px;color:#000;transform:skewX(-4deg);transform-origin:50% 60%;">/</span>
<span class="t" style="left:246.2px;top:720px;font-size:18.5px;color:#000;transform:skewX(-4deg);transform-origin:50% 60%;">/</span>
<span class="t" style="left:252.7px;top:720px;font-size:13px;color:#000;letter-spacing:0.167px;">preview.esv-digital.de</span>
<span class="t" style="left:380.6px;top:720px;font-size:18.5px;color:#000;transform:skewX(-4deg);transform-origin:50% 60%;">/</span>
<span class="t" style="left:386.6px;top:720px;font-size:13px;color:#000;letter-spacing:0.459px;">xhtml</span>
<span class="t" style="left:420.2px;top:720px;font-size:18.5px;color:#000;transform:skewX(-4deg);transform-origin:50% 60%;">/</span>
<span class="t" style="left:426.40000000000003px;top:720px;font-size:13px;color:#000;letter-spacing:0.249px;">document.jsf?alias=hduvp_</span>
<span class="t" style="left:590.0px;top:720px;font-size:13px;color:#000;letter-spacing:0.140px;">0600_para018</span>
<div class="r" style="left:47px;top:739px;width:1165px;height:19px;background:#e2efda;"></div>
<div class="r" style="left:47px;top:758px;width:1165px;height:1px;background:#a9d08e;"></div>
<div class="r" style="left:10px;top:758px;width:36px;height:1px;background:#d9d9d9;"></div>
<div class="r" style="left:47px;top:739px;width:156px;height:19px;overflow:hidden;">
<span class="t" style="left:-4.800000000000002px;top:1px;font-size:13px;color:#000;letter-spacing:1.066px;">uvp_</span>
<span class="t" style="left:26.0px;top:1px;font-size:13px;color:#000;letter-spacing:0.149px;">0600_para019</span>
</div>
<span class="t" style="left:206.4px;top:740px;font-size:13px;color:#000;letter-spacing:0.261px;">https:</span>
<span class="t" style="left:240.2px;top:740px;font-size:18.5px;color:#000;transform:skewX(-4deg);transform-origin:50% 60%;">/</span>
<span class="t" style="left:246.2px;top:740px;font-size:18.5px;color:#000;transform:skewX(-4deg);transform-origin:50% 60%;">/</span>
<span class="t" style="left:252.7px;top:740px;font-size:13px;color:#000;letter-spacing:0.167px;">preview.esv-digital.de</span>
<span class="t" style="left:380.6px;top:740px;font-size:18.5px;color:#000;transform:skewX(-4deg);transform-origin:50% 60%;">/</span>
<span class="t" style="left:386.6px;top:740px;font-size:13px;color:#000;letter-spacing:0.459px;">xhtml</span>
<span class="t" style="left:420.2px;top:740px;font-size:18.5px;color:#000;transform:skewX(-4deg);transform-origin:50% 60%;">/</span>
<span class="t" style="left:426.40000000000003px;top:740px;font-size:13px;color:#000;letter-spacing:0.249px;">document.jsf?alias=hduvp_</span>
<span class="t" style="left:590.0px;top:740px;font-size:13px;color:#000;letter-spacing:0.140px;">0600_para019</span>
<div class="r" style="left:737px;top:759px;width:1px;height:19px;background:#d4d4d4;"></div>
<div class="r" style="left:884px;top:759px;width:1px;height:19px;background:#d4d4d4;"></div>
<div class="r" style="left:1031px;top:759px;width:1px;height:19px;background:#d4d4d4;"></div>
<div class="r" style="left:203px;top:759px;width:1px;height:19px;background:#d4d4d4;"></div>
<div class="r" style="left:47px;top:778px;width:1165px;height:1px;background:#a9d08e;"></div>
<div class="r" style="left:10px;top:778px;width:36px;height:1px;background:#d9d9d9;"></div>
<div class="r" style="left:47px;top:759px;width:156px;height:19px;overflow:hidden;">
<span class="t" style="left:-4.800000000000002px;top:1px;font-size:13px;color:#000;letter-spacing:1.066px;">uvp_</span>
<span class="t" style="left:26.0px;top:1px;font-size:13px;color:#000;letter-spacing:0.149px;">0600_para002</span>
</div>
<span class="t" style="left:206.4px;top:760px;font-size:13px;color:#000;letter-spacing:0.261px;">https:</span>
<span class="t" style="left:240.2px;top:760px;font-size:18.5px;color:#000;transform:skewX(-4deg);transform-origin:50% 60%;">/</span>
<span class="t" style="left:246.2px;top:760px;font-size:18.5px;color:#000;transform:skewX(-4deg);transform-origin:50% 60%;">/</span>
<span class="t" style="left:252.7px;top:760px;font-size:13px;color:#000;letter-spacing:0.167px;">preview.esv-digital.de</span>
<span class="t" style="left:380.6px;top:760px;font-size:18.5px;color:#000;transform:skewX(-4deg);transform-origin:50% 60%;">/</span>
<span class="t" style="left:386.6px;top:760px;font-size:13px;color:#000;letter-spacing:0.459px;">xhtml</span>
<span class="t" style="left:420.2px;top:760px;font-size:18.5px;color:#000;transform:skewX(-4deg);transform-origin:50% 60%;">/</span>
<span class="t" style="left:426.40000000000003px;top:760px;font-size:13px;color:#000;letter-spacing:0.249px;">document.jsf?alias=hduvp_</span>
<span class="t" style="left:590.0px;top:760px;font-size:13px;color:#000;letter-spacing:0.140px;">0600_para002</span>
<div class="r" style="left:47px;top:779px;width:1165px;height:19px;background:#e2efda;"></div>
<div class="r" style="left:47px;top:798px;width:1165px;height:1px;background:#a9d08e;"></div>
<div class="r" style="left:10px;top:798px;width:36px;height:1px;background:#d9d9d9;"></div>
<div class="r" style="left:47px;top:779px;width:156px;height:19px;overflow:hidden;">
<span class="t" style="left:-4.800000000000002px;top:1px;font-size:13px;color:#000;letter-spacing:1.066px;">uvp_</span>
<span class="t" style="left:26.0px;top:1px;font-size:13px;color:#000;letter-spacing:0.149px;">0600_para020</span>
</div>
<span class="t" style="left:206.4px;top:780px;font-size:13px;color:#000;letter-spacing:0.261px;">https:</span>
<span class="t" style="left:240.2px;top:780px;font-size:18.5px;color:#000;transform:skewX(-4deg);transform-origin:50% 60%;">/</span>
<span class="t" style="left:246.2px;top:780px;font-size:18.5px;color:#000;transform:skewX(-4deg);transform-origin:50% 60%;">/</span>
<span class="t" style="left:252.7px;top:780px;font-size:13px;color:#000;letter-spacing:0.167px;">preview.esv-digital.de</span>
<span class="t" style="left:380.6px;top:780px;font-size:18.5px;color:#000;transform:skewX(-4deg);transform-origin:50% 60%;">/</span>
<span class="t" style="left:386.6px;top:780px;font-size:13px;color:#000;letter-spacing:0.459px;">xhtml</span>
<span class="t" style="left:420.2px;top:780px;font-size:18.5px;color:#000;transform:skewX(-4deg);transform-origin:50% 60%;">/</span>
<span class="t" style="left:426.40000000000003px;top:780px;font-size:13px;color:#000;letter-spacing:0.249px;">document.jsf?alias=hduvp_</span>
<span class="t" style="left:590.0px;top:780px;font-size:13px;color:#000;letter-spacing:0.140px;">0600_para020</span>
<div class="r" style="left:737px;top:799px;width:1px;height:19px;background:#d4d4d4;"></div>
<div class="r" style="left:884px;top:799px;width:1px;height:19px;background:#d4d4d4;"></div>
<div class="r" style="left:1031px;top:799px;width:1px;height:19px;background:#d4d4d4;"></div>
<div class="r" style="left:203px;top:799px;width:1px;height:19px;background:#d4d4d4;"></div>
<div class="r" style="left:47px;top:818px;width:1165px;height:1px;background:#a9d08e;"></div>
<div class="r" style="left:10px;top:818px;width:36px;height:1px;background:#d9d9d9;"></div>
<div class="r" style="left:47px;top:799px;width:156px;height:19px;overflow:hidden;">
<span class="t" style="left:-4.800000000000002px;top:1px;font-size:13px;color:#000;letter-spacing:1.066px;">uvp_</span>
<span class="t" style="left:26.0px;top:1px;font-size:13px;color:#000;letter-spacing:0.149px;">0600_para021</span>
</div>
<span class="t" style="left:206.4px;top:800px;font-size:13px;color:#000;letter-spacing:0.261px;">https:</span>
<span class="t" style="left:240.2px;top:800px;font-size:18.5px;color:#000;transform:skewX(-4deg);transform-origin:50% 60%;">/</span>
<span class="t" style="left:246.2px;top:800px;font-size:18.5px;color:#000;transform:skewX(-4deg);transform-origin:50% 60%;">/</span>
<span class="t" style="left:252.7px;top:800px;font-size:13px;color:#000;letter-spacing:0.167px;">preview.esv-digital.de</span>
<span class="t" style="left:380.6px;top:800px;font-size:18.5px;color:#000;transform:skewX(-4deg);transform-origin:50% 60%;">/</span>
<span class="t" style="left:386.6px;top:800px;font-size:13px;color:#000;letter-spacing:0.459px;">xhtml</span>
<span class="t" style="left:420.2px;top:800px;font-size:18.5px;color:#000;transform:skewX(-4deg);transform-origin:50% 60%;">/</span>
<span class="t" style="left:426.40000000000003px;top:800px;font-size:13px;color:#000;letter-spacing:0.249px;">document.jsf?alias=hduvp_</span>
<span class="t" style="left:590.0px;top:800px;font-size:13px;color:#000;letter-spacing:0.140px;">0600_para021</span>
<div class="r" style="left:47px;top:819px;width:1165px;height:19px;background:#e2efda;"></div>
<div class="r" style="left:47px;top:838px;width:1165px;height:1px;background:#a9d08e;"></div>
<div class="r" style="left:10px;top:838px;width:36px;height:1px;background:#d9d9d9;"></div>
<div class="r" style="left:47px;top:819px;width:156px;height:19px;overflow:hidden;">
<span class="t" style="left:-4.800000000000002px;top:1px;font-size:13px;color:#000;letter-spacing:1.066px;">uvp_</span>
<span class="t" style="left:26.0px;top:1px;font-size:13px;color:#000;letter-spacing:0.149px;">0600_para022</span>
</div>
<span class="t" style="left:206.4px;top:820px;font-size:13px;color:#000;letter-spacing:0.261px;">https:</span>
<span class="t" style="left:240.2px;top:820px;font-size:18.5px;color:#000;transform:skewX(-4deg);transform-origin:50% 60%;">/</span>
<span class="t" style="left:246.2px;top:820px;font-size:18.5px;color:#000;transform:skewX(-4deg);transform-origin:50% 60%;">/</span>
<span class="t" style="left:252.7px;top:820px;font-size:13px;color:#000;letter-spacing:0.167px;">preview.esv-digital.de</span>
<span class="t" style="left:380.6px;top:820px;font-size:18.5px;color:#000;transform:skewX(-4deg);transform-origin:50% 60%;">/</span>
<span class="t" style="left:386.6px;top:820px;font-size:13px;color:#000;letter-spacing:0.459px;">xhtml</span>
<span class="t" style="left:420.2px;top:820px;font-size:18.5px;color:#000;transform:skewX(-4deg);transform-origin:50% 60%;">/</span>
<span class="t" style="left:426.40000000000003px;top:820px;font-size:13px;color:#000;letter-spacing:0.249px;">document.jsf?alias=hduvp_</span>
<span class="t" style="left:590.0px;top:820px;font-size:13px;color:#000;letter-spacing:0.140px;">0600_para022</span>
<div class="r" style="left:737px;top:839px;width:1px;height:19px;background:#d4d4d4;"></div>
<div class="r" style="left:884px;top:839px;width:1px;height:19px;background:#d4d4d4;"></div>
<div class="r" style="left:1031px;top:839px;width:1px;height:19px;background:#d4d4d4;"></div>
<div class="r" style="left:203px;top:839px;width:1px;height:19px;background:#d4d4d4;"></div>
<div class="r" style="left:47px;top:858px;width:1165px;height:1px;background:#a9d08e;"></div>
<div class="r" style="left:10px;top:858px;width:36px;height:1px;background:#d9d9d9;"></div>
<div class="r" style="left:47px;top:839px;width:156px;height:19px;overflow:hidden;">
<span class="t" style="left:-4.800000000000002px;top:1px;font-size:13px;color:#000;letter-spacing:1.066px;">uvp_</span>
<span class="t" style="left:26.0px;top:1px;font-size:13px;color:#000;letter-spacing:0.149px;">0600_para003</span>
</div>
<span class="t" style="left:206.4px;top:840px;font-size:13px;color:#000;letter-spacing:0.261px;">https:</span>
<span class="t" style="left:240.2px;top:840px;font-size:18.5px;color:#000;transform:skewX(-4deg);transform-origin:50% 60%;">/</span>
<span class="t" style="left:246.2px;top:840px;font-size:18.5px;color:#000;transform:skewX(-4deg);transform-origin:50% 60%;">/</span>
<span class="t" style="left:252.7px;top:840px;font-size:13px;color:#000;letter-spacing:0.167px;">preview.esv-digital.de</span>
<span class="t" style="left:380.6px;top:840px;font-size:18.5px;color:#000;transform:skewX(-4deg);transform-origin:50% 60%;">/</span>
<span class="t" style="left:386.6px;top:840px;font-size:13px;color:#000;letter-spacing:0.459px;">xhtml</span>
<span class="t" style="left:420.2px;top:840px;font-size:18.5px;color:#000;transform:skewX(-4deg);transform-origin:50% 60%;">/</span>
<span class="t" style="left:426.40000000000003px;top:840px;font-size:13px;color:#000;letter-spacing:0.249px;">document.jsf?alias=hduvp_</span>
<span class="t" style="left:590.0px;top:840px;font-size:13px;color:#000;letter-spacing:0.140px;">0600_para003</span>
<div class="r" style="left:47px;top:859px;width:1165px;height:19px;background:#e2efda;"></div>
<div class="r" style="left:47px;top:878px;width:1165px;height:1px;background:#a9d08e;"></div>
<div class="r" style="left:10px;top:878px;width:36px;height:1px;background:#d9d9d9;"></div>
<div class="r" style="left:47px;top:859px;width:156px;height:19px;overflow:hidden;">
<span class="t" style="left:-4.800000000000002px;top:1px;font-size:13px;color:#000;letter-spacing:1.066px;">uvp_</span>
<span class="t" style="left:26.0px;top:1px;font-size:13px;color:#000;letter-spacing:0.149px;">0600_para004</span>
</div>
<span class="t" style="left:206.4px;top:860px;font-size:13px;color:#000;letter-spacing:0.261px;">https:</span>
<span class="t" style="left:240.2px;top:860px;font-size:18.5px;color:#000;transform:skewX(-4deg);transform-origin:50% 60%;">/</span>
<span class="t" style="left:246.2px;top:860px;font-size:18.5px;color:#000;transform:skewX(-4deg);transform-origin:50% 60%;">/</span>
<span class="t" style="left:252.7px;top:860px;font-size:13px;color:#000;letter-spacing:0.167px;">preview.esv-digital.de</span>
<span class="t" style="left:380.6px;top:860px;font-size:18.5px;color:#000;transform:skewX(-4deg);transform-origin:50% 60%;">/</span>
<span class="t" style="left:386.6px;top:860px;font-size:13px;color:#000;letter-spacing:0.459px;">xhtml</span>
<span class="t" style="left:420.2px;top:860px;font-size:18.5px;color:#000;transform:skewX(-4deg);transform-origin:50% 60%;">/</span>
<span class="t" style="left:426.40000000000003px;top:860px;font-size:13px;color:#000;letter-spacing:0.249px;">document.jsf?alias=hduvp_</span>
<span class="t" style="left:590.0px;top:860px;font-size:13px;color:#000;letter-spacing:0.140px;">0600_para004</span>
<div class="r" style="left:737px;top:879px;width:1px;height:19px;background:#d4d4d4;"></div>
<div class="r" style="left:884px;top:879px;width:1px;height:19px;background:#d4d4d4;"></div>
<div class="r" style="left:1031px;top:879px;width:1px;height:19px;background:#d4d4d4;"></div>
<div class="r" style="left:203px;top:879px;width:1px;height:19px;background:#d4d4d4;"></div>
<div class="r" style="left:47px;top:898px;width:1165px;height:1px;background:#a9d08e;"></div>
<div class="r" style="left:10px;top:898px;width:36px;height:1px;background:#d9d9d9;"></div>
<div class="r" style="left:47px;top:879px;width:156px;height:19px;overflow:hidden;">
<span class="t" style="left:-4.800000000000002px;top:1px;font-size:13px;color:#000;letter-spacing:1.066px;">uvp_</span>
<span class="t" style="left:26.0px;top:1px;font-size:13px;color:#000;letter-spacing:0.149px;">0600_para005</span>
</div>
<span class="t" style="left:206.4px;top:880px;font-size:13px;color:#000;letter-spacing:0.261px;">https:</span>
<span class="t" style="left:240.2px;top:880px;font-size:18.5px;color:#000;transform:skewX(-4deg);transform-origin:50% 60%;">/</span>
<span class="t" style="left:246.2px;top:880px;font-size:18.5px;color:#000;transform:skewX(-4deg);transform-origin:50% 60%;">/</span>
<span class="t" style="left:252.7px;top:880px;font-size:13px;color:#000;letter-spacing:0.167px;">preview.esv-digital.de</span>
<span class="t" style="left:380.6px;top:880px;font-size:18.5px;color:#000;transform:skewX(-4deg);transform-origin:50% 60%;">/</span>
<span class="t" style="left:386.6px;top:880px;font-size:13px;color:#000;letter-spacing:0.459px;">xhtml</span>
<span class="t" style="left:420.2px;top:880px;font-size:18.5px;color:#000;transform:skewX(-4deg);transform-origin:50% 60%;">/</span>
<span class="t" style="left:426.40000000000003px;top:880px;font-size:13px;color:#000;letter-spacing:0.249px;">document.jsf?alias=hduvp_</span>
<span class="t" style="left:590.0px;top:880px;font-size:13px;color:#000;letter-spacing:0.140px;">0600_para005</span>
<div class="r" style="left:47px;top:899px;width:1165px;height:19px;background:#e2efda;"></div>
<div class="r" style="left:47px;top:918px;width:1165px;height:1px;background:#a9d08e;"></div>
<div class="r" style="left:10px;top:918px;width:36px;height:1px;background:#d9d9d9;"></div>
<div class="r" style="left:47px;top:899px;width:156px;height:19px;overflow:hidden;">
<span class="t" style="left:-4.800000000000002px;top:1px;font-size:13px;color:#000;letter-spacing:1.066px;">uvp_</span>
<span class="t" style="left:26.0px;top:1px;font-size:13px;color:#000;letter-spacing:0.149px;">0600_para006</span>
</div>
<span class="t" style="left:206.4px;top:900px;font-size:13px;color:#000;letter-spacing:0.261px;">https:</span>
<span class="t" style="left:240.2px;top:900px;font-size:18.5px;color:#000;transform:skewX(-4deg);transform-origin:50% 60%;">/</span>
<span class="t" style="left:246.2px;top:900px;font-size:18.5px;color:#000;transform:skewX(-4deg);transform-origin:50% 60%;">/</span>
<span class="t" style="left:252.7px;top:900px;font-size:13px;color:#000;letter-spacing:0.167px;">preview.esv-digital.de</span>
<span class="t" style="left:380.6px;top:900px;font-size:18.5px;color:#000;transform:skewX(-4deg);transform-origin:50% 60%;">/</span>
<span class="t" style="left:386.6px;top:900px;font-size:13px;color:#000;letter-spacing:0.459px;">xhtml</span>
<span class="t" style="left:420.2px;top:900px;font-size:18.5px;color:#000;transform:skewX(-4deg);transform-origin:50% 60%;">/</span>
<span class="t" style="left:426.40000000000003px;top:900px;font-size:13px;color:#000;letter-spacing:0.249px;">document.jsf?alias=hduvp_</span>
<span class="t" style="left:590.0px;top:900px;font-size:13px;color:#000;letter-spacing:0.140px;">0600_para006</span>
<div class="r" style="left:737px;top:919px;width:1px;height:19px;background:#d4d4d4;"></div>
<div class="r" style="left:884px;top:919px;width:1px;height:19px;background:#d4d4d4;"></div>
<div class="r" style="left:1031px;top:919px;width:1px;height:19px;background:#d4d4d4;"></div>
<div class="r" style="left:203px;top:919px;width:1px;height:19px;background:#d4d4d4;"></div>
<div class="r" style="left:47px;top:938px;width:1165px;height:1px;background:#a9d08e;"></div>
<div class="r" style="left:10px;top:938px;width:36px;height:1px;background:#d9d9d9;"></div>
<div class="r" style="left:47px;top:919px;width:156px;height:19px;overflow:hidden;">
<span class="t" style="left:-4.800000000000002px;top:1px;font-size:13px;color:#000;letter-spacing:1.066px;">uvp_</span>
<span class="t" style="left:26.0px;top:1px;font-size:13px;color:#000;letter-spacing:0.149px;">0600_para007</span>
</div>
<span class="t" style="left:206.4px;top:920px;font-size:13px;color:#000;letter-spacing:0.261px;">https:</span>
<span class="t" style="left:240.2px;top:920px;font-size:18.5px;color:#000;transform:skewX(-4deg);transform-origin:50% 60%;">/</span>
<span class="t" style="left:246.2px;top:920px;font-size:18.5px;color:#000;transform:skewX(-4deg);transform-origin:50% 60%;">/</span>
<span class="t" style="left:252.7px;top:920px;font-size:13px;color:#000;letter-spacing:0.167px;">preview.esv-digital.de</span>
<span class="t" style="left:380.6px;top:920px;font-size:18.5px;color:#000;transform:skewX(-4deg);transform-origin:50% 60%;">/</span>
<span class="t" style="left:386.6px;top:920px;font-size:13px;color:#000;letter-spacing:0.459px;">xhtml</span>
<span class="t" style="left:420.2px;top:920px;font-size:18.5px;color:#000;transform:skewX(-4deg);transform-origin:50% 60%;">/</span>
<span class="t" style="left:426.40000000000003px;top:920px;font-size:13px;color:#000;letter-spacing:0.249px;">document.jsf?alias=hduvp_</span>
<span class="t" style="left:590.0px;top:920px;font-size:13px;color:#000;letter-spacing:0.140px;">0600_para007</span>
<span class="t" style="left:24.1234375px;top:240px;font-size:12.5px;color:#666;letter-spacing:-0.2px;">1</span>
<span class="t" style="left:24.1234375px;top:260px;font-size:12.5px;color:#666;letter-spacing:-0.2px;">2</span>
<span class="t" style="left:24.1234375px;top:280px;font-size:12.5px;color:#666;letter-spacing:-0.2px;">3</span>
<span class="t" style="left:24.1234375px;top:300px;font-size:12.5px;color:#666;letter-spacing:-0.2px;">4</span>
<span class="t" style="left:24.1234375px;top:320px;font-size:12.5px;color:#666;letter-spacing:-0.2px;">5</span>
<span class="t" style="left:24.1234375px;top:340px;font-size:12.5px;color:#666;letter-spacing:-0.2px;">6</span>
<span class="t" style="left:24.1234375px;top:360px;font-size:12.5px;color:#666;letter-spacing:-0.2px;">7</span>
<div class="r" style="left:10px;top:378px;width:36px;height:21px;background:#d2d0ce;"></div>
<div class="r" style="left:45px;top:378px;width:2px;height:21px;background:#217346;"></div>
<span class="t" style="left:24.1234375px;top:380px;font-size:12.5px;font-weight:700;color:#1e7145;">8</span>
<span class="t" style="left:24.1234375px;top:400px;font-size:12.5px;color:#666;letter-spacing:-0.2px;">9</span>
<span class="t" style="left:20.646875px;top:420px;font-size:12.5px;color:#666;letter-spacing:-0.2px;">10</span>
<span class="t" style="left:21.1078125px;top:440px;font-size:12.5px;color:#666;letter-spacing:-0.2px;">11</span>
<span class="t" style="left:20.646875px;top:460px;font-size:12.5px;color:#666;letter-spacing:-0.2px;">12</span>
<span class="t" style="left:20.646875px;top:480px;font-size:12.5px;color:#666;letter-spacing:-0.2px;">13</span>
<span class="t" style="left:20.646875px;top:500px;font-size:12.5px;color:#666;letter-spacing:-0.2px;">14</span>
<span class="t" style="left:20.646875px;top:520px;font-size:12.5px;color:#666;letter-spacing:-0.2px;">15</span>
<span class="t" style="left:20.646875px;top:540px;font-size:12.5px;color:#666;letter-spacing:-0.2px;">16</span>
<span class="t" style="left:20.646875px;top:560px;font-size:12.5px;color:#666;letter-spacing:-0.2px;">17</span>
<span class="t" style="left:20.646875px;top:580px;font-size:12.5px;color:#666;letter-spacing:-0.2px;">18</span>
<span class="t" style="left:20.646875px;top:600px;font-size:12.5px;color:#666;letter-spacing:-0.2px;">19</span>
<span class="t" style="left:20.646875px;top:620px;font-size:12.5px;color:#666;letter-spacing:-0.2px;">20</span>
<span class="t" style="left:20.646875px;top:640px;font-size:12.5px;color:#666;letter-spacing:-0.2px;">21</span>
<span class="t" style="left:20.646875px;top:660px;font-size:12.5px;color:#666;letter-spacing:-0.2px;">22</span>
<span class="t" style="left:20.646875px;top:680px;font-size:12.5px;color:#666;letter-spacing:-0.2px;">23</span>
<span class="t" style="left:20.646875px;top:700px;font-size:12.5px;color:#666;letter-spacing:-0.2px;">24</span>
<span class="t" style="left:20.646875px;top:720px;font-size:12.5px;color:#666;letter-spacing:-0.2px;">25</span>
<span class="t" style="left:20.646875px;top:740px;font-size:12.5px;color:#666;letter-spacing:-0.2px;">26</span>
<span class="t" style="left:20.646875px;top:760px;font-size:12.5px;color:#666;letter-spacing:-0.2px;">27</span>
<span class="t" style="left:20.646875px;top:780px;font-size:12.5px;color:#666;letter-spacing:-0.2px;">28</span>
<span class="t" style="left:20.646875px;top:800px;font-size:12.5px;color:#666;letter-spacing:-0.2px;">29</span>
<span class="t" style="left:20.646875px;top:820px;font-size:12.5px;color:#666;letter-spacing:-0.2px;">30</span>
<span class="t" style="left:20.646875px;top:840px;font-size:12.5px;color:#666;letter-spacing:-0.2px;">31</span>
<span class="t" style="left:20.646875px;top:860px;font-size:12.5px;color:#666;letter-spacing:-0.2px;">32</span>
<span class="t" style="left:20.646875px;top:880px;font-size:12.5px;color:#666;letter-spacing:-0.2px;">33</span>
<span class="t" style="left:20.646875px;top:900px;font-size:12.5px;color:#666;letter-spacing:-0.2px;">34</span>
<div class="r" style="left:10px;top:258px;width:36px;height:1px;background:#d9d9d9;"></div>
<div class="r" style="left:1211px;top:239px;width:1px;height:685px;background:#a9d08e;"></div>
<div class="r" style="left:10px;top:924px;width:1221px;height:72px;background:#f5f5f5;"></div>
<div class="r" style="left:1214px;top:239px;width:16px;height:685px;background:#f1f1f1;"></div>
<div class="r" style="left:1214px;top:220px;width:16px;height:19px;background:#f5f5f5;"></div>
<div class="r" style="left:1214px;top:256px;width:16px;height:48px;background:#c8c8c8;"></div>
<svg class="r" style="left:1216px;top:242px;" width="13" height="10" viewBox="0 0 13 10"><path d="M2 7.6 L6.5 3 L11 7.6" fill="none" stroke="#505050" stroke-width="2.1"/></svg>
<svg class="r" style="left:1216px;top:911px;" width="13" height="10" viewBox="0 0 13 10"><path d="M2 2.4 L6.5 7 L11 2.4" fill="none" stroke="#505050" stroke-width="2.1"/></svg>
<div class="r" style="left:47px;top:924px;width:1183px;height:17px;background:#f1f1f1;"></div>
<div class="r" style="left:756px;top:924px;width:186px;height:17px;background:#c8c8c8;"></div>
<svg class="r" style="left:50px;top:927px;" width="10" height="11" viewBox="0 0 10 11"><path d="M7.6 1.5 L3 5.5 L7.6 9.5" fill="none" stroke="#505050" stroke-width="2.1"/></svg>
<svg class="r" style="left:1201px;top:927px;" width="10" height="11" viewBox="0 0 10 11"><path d="M2.4 1.5 L7 5.5 L2.4 9.5" fill="none" stroke="#505050" stroke-width="2.1"/></svg>
<svg class="r" style="left:21px;top:950px;" width="10" height="13" viewBox="0 0 10 13"><path d="M7.5 1.5 L2.5 6.5 L7.5 11.5" fill="none" stroke="#c8c6c4" stroke-width="1.1"/></svg>
<svg class="r" style="left:53px;top:950px;" width="10" height="13" viewBox="0 0 10 13"><path d="M2.5 1.5 L7.5 6.5 L2.5 11.5" fill="none" stroke="#c8c6c4" stroke-width="1.1"/></svg>
<div class="r" style="left:84px;top:952px;width:12px;height:1px;background:#3b3a39;"></div>
<div class="r" style="left:84px;top:956px;width:12px;height:1px;background:#3b3a39;"></div>
<div class="r" style="left:84px;top:960px;width:12px;height:1px;background:#3b3a39;"></div>
<span class="t" style="left:117.1px;top:947px;font-size:13.8px;letter-spacing:0.037px;color:#323130;-webkit-text-stroke:0.42px currentColor;">Tabelle2</span>
<div class="r" style="left:115px;top:970px;width:56px;height:3px;background:#107c41;"></div>
<span class="t" style="left:193px;top:947px;font-size:13.3px;letter-spacing:-0.356px;color:#484644;">Tabelle1</span>
<svg class="r" style="left:264px;top:950px;" width="13" height="13" viewBox="0 0 13 13"><path d="M6.5 1 V12 M1 6.5 H12" stroke="#3b3a39" stroke-width="1.1"/></svg>
<div class="r" style="left:10px;top:973px;width:1221px;height:1px;background:#e1e1e1;"></div>
<div class="r" style="left:10px;top:974px;width:1221px;height:22px;background:#fff;"></div>
<span class="t" style="left:24.2px;top:977px;font-size:11.5px;letter-spacing:0.244px;color:#444;">Rechenmodus : Automatisch</span>
<span class="t" style="left:195.5px;top:977px;font-size:11.5px;letter-spacing:0.209px;color:#444;">Arbeitsmappenstatistiken</span>
<svg class="r" style="left:1010.4px;top:982.4px;" width="9.2" height="9.2" viewBox="0 0 9.2 9.2"><path d="M2 3.30 L4.6 5.90 L7.2 3.30" fill="none" stroke="#424242" stroke-width="1.2"/></svg>
<span class="t" style="left:1060px;top:977px;font-size:11.5px;letter-spacing:0.098px;color:#444;">Feedback an Microsoft senden</span>
<div class="r" style="left:1230px;top:188px;width:1px;height:808px;background:#fdfaf6;"></div>
</body></html>
